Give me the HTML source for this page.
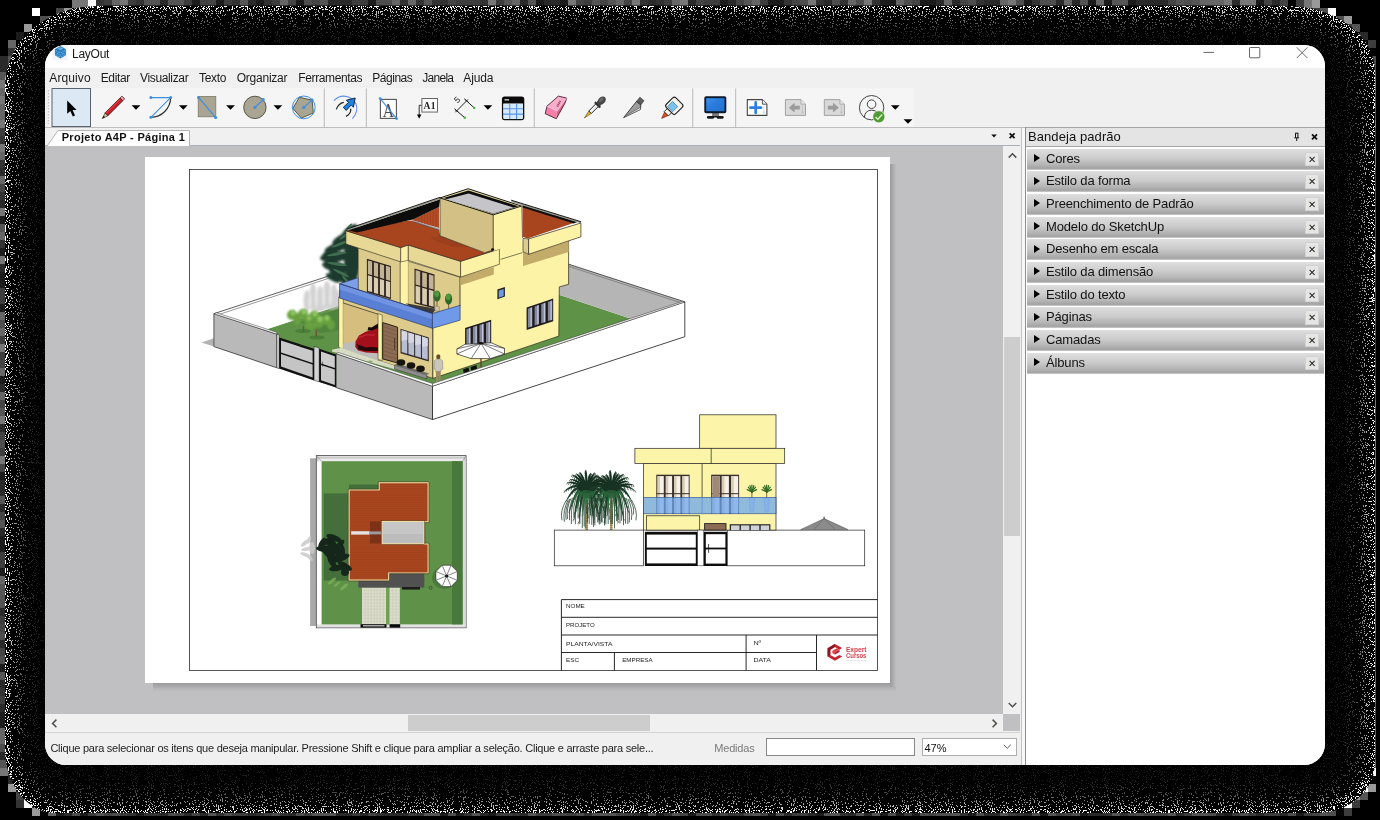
<!DOCTYPE html>
<html>
<head>
<meta charset="utf-8">
<title>LayOut</title>
<style>
*{box-sizing:border-box;margin:0;padding:0}
html,body{width:1380px;height:820px;overflow:hidden;background:#000;font-family:"Liberation Sans",sans-serif;color:#000}
.abs{position:absolute}
#shadow{position:absolute;left:0;top:0;width:1380px;height:820px}
#win{will-change:transform;position:absolute;left:45px;top:45px;width:1280px;height:720px;border-radius:21px;overflow:hidden;background:#f0f0f0}
#title{position:absolute;left:0;top:0;width:1280px;height:23px;background:#fff}
#title .t{position:absolute;left:27px;top:2px;font-size:12px;color:#1a1a1a;letter-spacing:-.25px}
#menu{position:absolute;left:0;top:23px;width:1280px;height:20px;background:#f0f0f0;font-size:12px;color:#1b1b1b}
#menu span{position:absolute;top:3px;white-space:nowrap}
#tool{position:absolute;left:0;top:43px;width:1280px;height:40px;background:#f0f0f0}
#toolin{position:absolute;left:3px;top:0;width:866px;height:39px;background:#f5f5f5}
#toolline{position:absolute;left:0;top:82px;width:1280px;height:1px;background:#bdbdbd}
#tabs{position:absolute;left:0;top:83px;width:976.5px;height:18px;background:#f0f0f0}
#canvas{position:absolute;left:0;top:101px;width:958px;height:568px;background:#c0c0c2}
#paper{position:absolute;left:100px;top:11px;width:745px;height:526px;overflow:hidden;background:#fff}
#vscroll{position:absolute;left:958px;top:101px;width:17px;height:568px;background:#f0f0f0}
#hscroll{position:absolute;left:0;top:669px;width:958px;height:17px;background:#f0f0f0}
#corner{position:absolute;left:958px;top:669px;width:18.5px;height:17.5px;background:#c0c0c2}
#status{position:absolute;left:0;top:686px;width:980px;height:34px;background:#f0f0f0;font-size:12px;color:#222}
#split{position:absolute;left:975px;top:83px;width:6px;height:637px;background:#f0f0f0}
#panel{position:absolute;left:980px;top:82px;width:300px;height:638px;background:#fff;border-left:1px solid #8e8e8e}
#phead{position:absolute;left:0;top:0;width:299px;height:20px;background:#e4e4e4;border-top:1px solid #a6a6a6;border-bottom:1px solid #a6a6a6;font-size:13px}
.bar{position:absolute;left:1px;width:297px;height:21px;font-size:13px;color:#111;
 background:linear-gradient(#e0e0e0 0%,#d9d9d9 12%,#cbcbcb 45%,#b4b4b4 75%,#a3a3a3 92%,#b9b9b9 97%,#e6e6e6 100%)}
.bar .tri{position:absolute;left:7px;top:5.5px;width:0;height:0;border-left:6.5px solid #000;border-top:4.2px solid transparent;border-bottom:4.2px solid transparent}
.bar .lb{position:absolute;left:19px;top:2px;white-space:nowrap;letter-spacing:-.15px}
.bar .x{position:absolute;left:277.5px;top:3px;width:14.5px;height:14.5px;background:#e6e6e6;border:1px solid #d2d2d2}
</style>
</head>
<body>
<svg id="shadow" width="1380" height="820" viewBox="0 0 1380 820">
<!--SH0-->
<defs><filter id="nz" x="0" y="0" width="1380" height="820" filterUnits="userSpaceOnUse" color-interpolation-filters="sRGB">
<feGaussianBlur in="SourceAlpha" stdDeviation="8"/><feComponentTransfer result="b"><feFuncA type="table" tableValues=".5 .5 1"/></feComponentTransfer>
<feGaussianBlur in="SourceAlpha" stdDeviation="16"/><feComponentTransfer result="b2"><feFuncA type="table" tableValues=".5 .5 1"/></feComponentTransfer>
<feColorMatrix in="b" type="matrix" values="0 0 0 -.18 .525  0 0 0 -.18 .525  0 0 0 -.18 .525  0 0 0 0 1" result="m"/>
<feColorMatrix in="b2" type="matrix" values="0 0 0 -2 2.1  0 0 0 -2 2.1  0 0 0 -2 2.1  0 0 0 0 1" result="br"/>
<feTurbulence type="fractalNoise" baseFrequency="0.93 0.77" numOctaves="2" seed="3" result="t"/>
<feColorMatrix in="t" type="matrix" values="1 0 0 0 0  1 0 0 0 0  1 0 0 0 0  0 0 0 0 1" result="n"/>
<feComposite in="m" in2="n" operator="arithmetic" k1="0" k2="1" k3="-1" k4="1" result="d"/>
<feComponentTransfer in="d" result="th"><feFuncR type="linear" slope="200" intercept="-199"/><feFuncG type="linear" slope="200" intercept="-199"/><feFuncB type="linear" slope="200" intercept="-199"/></feComponentTransfer>
<feComposite in="th" in2="br" operator="arithmetic" k1="1" k2="0" k3="0" k4="0" result="o"/>
<feComposite in="o" in2="SourceAlpha" operator="in"/>
</filter></defs>
<path d="M0 88h6v8h-6zM0 104h6v8h-6zM0 112h6v8h-6zM0 152h6v8h-6zM0 176h6v8h-6zM0 232h6v8h-6zM0 312h6v8h-6zM0 328h6v8h-6zM0 368h6v8h-6zM0 392h6v8h-6zM0 576h6v8h-6zM0 728h6v8h-6zM0 736h6v8h-6zM112 0h8v5.5h-8zM280 0h8v5.5h-8zM392 0h8v5.5h-8zM408 0h8v5.5h-8zM512 0h8v5.5h-8zM616 0h8v5.5h-8zM672 0h8v5.5h-8zM752 0h8v5.5h-8zM848 0h8v5.5h-8zM896 0h8v5.5h-8zM944 0h8v5.5h-8zM1000 0h8v5.5h-8zM1064 0h8v5.5h-8zM1096 0h8v5.5h-8zM1200 0h8v5.5h-8zM1208 0h8v5.5h-8zM1216 0h8v5.5h-8zM1280 0h8v5.5h-8zM1374 72h2v8h-2zM1374 88h2v8h-2zM1374 216h2v8h-2zM1374 264h2v8h-2zM1374 304h2v8h-2zM1374 384h2v8h-2zM1374 432h2v8h-2zM1374 448h2v8h-2zM1374 488h2v8h-2zM1374 528h2v8h-2zM1374 536h2v8h-2zM1374 560h2v8h-2zM1374 584h2v8h-2zM1374 592h2v8h-2zM1374 600h2v8h-2zM1374 640h2v8h-2zM1374 672h2v8h-2zM1374 680h2v8h-2zM1374 696h2v8h-2zM1374 728h2v8h-2zM1374 744h2v8h-2zM1374 760h2v8h-2zM8 40h8v8h-8zM48 16h8v8h-8zM48 808h8v8h-8z" fill="#666"/>
<path d="M0 96h6v8h-6zM0 120h6v8h-6zM0 144h6v8h-6zM0 208h6v8h-6zM0 256h6v8h-6zM0 344h6v8h-6zM0 416h6v8h-6zM0 456h6v8h-6zM96 0h8v5.5h-8zM120 0h8v5.5h-8zM488 0h8v5.5h-8zM568 0h8v5.5h-8zM632 0h8v5.5h-8zM680 0h8v5.5h-8zM808 0h8v5.5h-8zM864 0h8v5.5h-8zM1008 0h8v5.5h-8zM1224 0h8v5.5h-8zM1240 0h8v5.5h-8zM1248 0h8v5.5h-8zM1374 80h2v8h-2zM1374 120h2v8h-2zM1374 144h2v8h-2zM1374 152h2v8h-2zM1374 160h2v8h-2zM1374 240h2v8h-2zM1374 400h2v8h-2zM1374 440h2v8h-2zM1374 456h2v8h-2zM1374 464h2v8h-2zM1374 496h2v8h-2zM1374 552h2v8h-2zM1374 568h2v8h-2zM1374 624h2v8h-2zM0 80h8v8h-8zM72 0h8v8h-8zM80 0h8v8h-8zM1304 0h8v8h-8zM0 768h8v8h-8z" fill="#777"/>
<path d="M0 128h6v8h-6zM0 288h6v8h-6zM0 296h6v8h-6zM0 336h6v8h-6zM0 352h6v8h-6zM0 448h6v8h-6zM0 552h6v8h-6zM0 560h6v8h-6zM0 616h6v8h-6zM0 696h6v8h-6zM104 0h8v5.5h-8zM128 0h8v5.5h-8zM184 0h8v5.5h-8zM224 0h8v5.5h-8zM272 0h8v5.5h-8zM352 0h8v5.5h-8zM360 0h8v5.5h-8zM456 0h8v5.5h-8zM464 0h8v5.5h-8zM472 0h8v5.5h-8zM496 0h8v5.5h-8zM584 0h8v5.5h-8zM664 0h8v5.5h-8zM704 0h8v5.5h-8zM712 0h8v5.5h-8zM760 0h8v5.5h-8zM88 811h8v5h-8zM120 811h8v5h-8zM232 811h8v5h-8zM240 811h8v5h-8zM264 811h8v5h-8zM304 811h8v5h-8zM352 811h8v5h-8zM408 811h8v5h-8zM496 811h8v5h-8zM504 811h8v5h-8zM536 811h8v5h-8zM544 811h8v5h-8zM568 811h8v5h-8zM624 811h8v5h-8zM792 811h8v5h-8zM800 811h8v5h-8zM904 811h8v5h-8zM1008 811h8v5h-8zM1056 811h8v5h-8zM1184 811h8v5h-8zM1232 811h8v5h-8zM1248 811h8v5h-8zM1264 811h8v5h-8zM1272 811h8v5h-8zM1304 811h8v5h-8zM1374 136h2v8h-2zM1374 168h2v8h-2zM1374 200h2v8h-2zM1374 248h2v8h-2zM1374 272h2v8h-2zM1374 280h2v8h-2zM1374 336h2v8h-2zM1374 352h2v8h-2zM1374 368h2v8h-2zM1374 504h2v8h-2zM1374 736h2v8h-2zM1374 752h2v8h-2zM1368 40h8v8h-8zM1344 24h8v8h-8zM1312 8h8v8h-8zM1296 0h8v8h-8zM1352 800h8v8h-8zM1344 808h8v8h-8z" fill="#3d3d3d"/>
<path d="M0 136h6v8h-6zM0 160h6v8h-6zM0 192h6v8h-6zM0 240h6v8h-6zM0 688h6v8h-6zM0 744h6v8h-6zM136 0h8v5.5h-8zM232 0h8v5.5h-8zM264 0h8v5.5h-8zM400 0h8v5.5h-8zM416 0h8v5.5h-8zM432 0h8v5.5h-8zM440 0h8v5.5h-8zM480 0h8v5.5h-8zM640 0h8v5.5h-8zM656 0h8v5.5h-8zM784 0h8v5.5h-8zM816 0h8v5.5h-8zM840 0h8v5.5h-8zM872 0h8v5.5h-8zM976 0h8v5.5h-8zM1032 0h8v5.5h-8zM128 811h8v5h-8zM144 811h8v5h-8zM152 811h8v5h-8zM216 811h8v5h-8zM256 811h8v5h-8zM280 811h8v5h-8zM376 811h8v5h-8zM416 811h8v5h-8zM464 811h8v5h-8zM512 811h8v5h-8zM584 811h8v5h-8zM632 811h8v5h-8zM664 811h8v5h-8zM712 811h8v5h-8zM728 811h8v5h-8zM736 811h8v5h-8zM840 811h8v5h-8zM960 811h8v5h-8zM1016 811h8v5h-8zM1104 811h8v5h-8zM1120 811h8v5h-8zM8 48h8v8h-8zM96 0h8v8h-8zM8 768h8v8h-8zM16 800h8v8h-8z" fill="#333"/>
<path d="M0 168h6v8h-6zM0 200h6v8h-6zM0 264h6v8h-6zM0 384h6v8h-6zM0 424h6v8h-6zM0 480h6v8h-6zM0 488h6v8h-6zM0 504h6v8h-6zM0 528h6v8h-6zM0 608h6v8h-6zM0 640h6v8h-6zM0 680h6v8h-6zM0 704h6v8h-6zM160 0h8v5.5h-8zM248 0h8v5.5h-8zM328 0h8v5.5h-8zM336 0h8v5.5h-8zM344 0h8v5.5h-8zM520 0h8v5.5h-8zM544 0h8v5.5h-8zM552 0h8v5.5h-8zM648 0h8v5.5h-8zM688 0h8v5.5h-8zM728 0h8v5.5h-8zM824 0h8v5.5h-8zM936 0h8v5.5h-8zM952 0h8v5.5h-8zM984 0h8v5.5h-8zM992 0h8v5.5h-8zM1056 0h8v5.5h-8zM1072 0h8v5.5h-8zM1136 0h8v5.5h-8zM1144 0h8v5.5h-8zM1152 0h8v5.5h-8zM1160 0h8v5.5h-8zM1232 0h8v5.5h-8zM1272 0h8v5.5h-8zM64 811h8v5h-8zM160 811h8v5h-8zM184 811h8v5h-8zM200 811h8v5h-8zM248 811h8v5h-8zM288 811h8v5h-8zM336 811h8v5h-8zM344 811h8v5h-8zM360 811h8v5h-8zM384 811h8v5h-8zM392 811h8v5h-8zM400 811h8v5h-8zM480 811h8v5h-8zM520 811h8v5h-8zM784 811h8v5h-8zM808 811h8v5h-8zM848 811h8v5h-8zM864 811h8v5h-8zM984 811h8v5h-8zM992 811h8v5h-8zM1024 811h8v5h-8zM1088 811h8v5h-8zM1096 811h8v5h-8zM1176 811h8v5h-8zM1216 811h8v5h-8zM1256 811h8v5h-8zM1280 811h8v5h-8zM0 64h8v8h-8zM0 56h8v8h-8zM1360 32h8v8h-8zM0 752h8v8h-8zM8 776h8v8h-8zM32 800h8v8h-8z" fill="#2a2a2a"/>
<path d="M0 184h6v8h-6zM0 360h6v8h-6zM0 400h6v8h-6zM0 432h6v8h-6zM0 464h6v8h-6zM0 512h6v8h-6zM0 624h6v8h-6zM0 648h6v8h-6zM200 0h8v5.5h-8zM208 0h8v5.5h-8zM288 0h8v5.5h-8zM312 0h8v5.5h-8zM448 0h8v5.5h-8zM576 0h8v5.5h-8zM600 0h8v5.5h-8zM624 0h8v5.5h-8zM696 0h8v5.5h-8zM736 0h8v5.5h-8zM792 0h8v5.5h-8zM912 0h8v5.5h-8zM960 0h8v5.5h-8zM1168 0h8v5.5h-8zM1264 0h8v5.5h-8zM104 811h8v5h-8zM176 811h8v5h-8zM192 811h8v5h-8zM368 811h8v5h-8zM560 811h8v5h-8zM616 811h8v5h-8zM680 811h8v5h-8zM720 811h8v5h-8zM760 811h8v5h-8zM928 811h8v5h-8zM1064 811h8v5h-8zM1128 811h8v5h-8zM1144 811h8v5h-8zM1152 811h8v5h-8zM1160 811h8v5h-8zM1312 811h8v5h-8zM1374 128h2v8h-2zM1374 176h2v8h-2zM1374 184h2v8h-2zM1374 344h2v8h-2zM1374 376h2v8h-2zM1374 408h2v8h-2zM1374 424h2v8h-2zM1374 512h2v8h-2zM1374 576h2v8h-2zM1374 648h2v8h-2zM1374 664h2v8h-2zM1374 712h2v8h-2zM56 8h8v8h-8zM1280 0h8v8h-8zM16 792h8v8h-8z" fill="#444"/>
<path d="M0 216h6v8h-6zM0 248h6v8h-6zM0 272h6v8h-6zM0 280h6v8h-6zM0 304h6v8h-6zM0 376h6v8h-6zM0 472h6v8h-6zM0 536h6v8h-6zM0 544h6v8h-6zM0 568h6v8h-6zM0 664h6v8h-6zM0 712h6v8h-6zM0 720h6v8h-6zM192 0h8v5.5h-8zM216 0h8v5.5h-8zM256 0h8v5.5h-8zM296 0h8v5.5h-8zM368 0h8v5.5h-8zM536 0h8v5.5h-8zM560 0h8v5.5h-8zM720 0h8v5.5h-8zM768 0h8v5.5h-8zM776 0h8v5.5h-8zM880 0h8v5.5h-8zM888 0h8v5.5h-8zM920 0h8v5.5h-8zM928 0h8v5.5h-8zM1024 0h8v5.5h-8zM1088 0h8v5.5h-8zM1104 0h8v5.5h-8zM1128 0h8v5.5h-8zM1256 0h8v5.5h-8zM56 811h8v5h-8zM80 811h8v5h-8zM136 811h8v5h-8zM440 811h8v5h-8zM456 811h8v5h-8zM488 811h8v5h-8zM640 811h8v5h-8zM656 811h8v5h-8zM688 811h8v5h-8zM768 811h8v5h-8zM816 811h8v5h-8zM880 811h8v5h-8zM896 811h8v5h-8zM912 811h8v5h-8zM968 811h8v5h-8zM1040 811h8v5h-8zM1080 811h8v5h-8zM1224 811h8v5h-8zM1296 811h8v5h-8zM16 32h8v8h-8zM16 784h8v8h-8z" fill="#1c1c1c"/>
<path d="M0 224h6v8h-6zM0 408h6v8h-6zM0 496h6v8h-6zM0 520h6v8h-6zM0 584h6v8h-6zM0 592h6v8h-6zM0 600h6v8h-6zM0 672h6v8h-6zM144 0h8v5.5h-8zM152 0h8v5.5h-8zM168 0h8v5.5h-8zM176 0h8v5.5h-8zM240 0h8v5.5h-8zM320 0h8v5.5h-8zM424 0h8v5.5h-8zM504 0h8v5.5h-8zM528 0h8v5.5h-8zM592 0h8v5.5h-8zM608 0h8v5.5h-8zM744 0h8v5.5h-8zM1080 0h8v5.5h-8zM1112 0h8v5.5h-8zM1120 0h8v5.5h-8zM1176 0h8v5.5h-8zM1192 0h8v5.5h-8zM96 811h8v5h-8zM208 811h8v5h-8zM312 811h8v5h-8zM320 811h8v5h-8zM328 811h8v5h-8zM424 811h8v5h-8zM432 811h8v5h-8zM472 811h8v5h-8zM528 811h8v5h-8zM600 811h8v5h-8zM608 811h8v5h-8zM648 811h8v5h-8zM672 811h8v5h-8zM752 811h8v5h-8zM824 811h8v5h-8zM832 811h8v5h-8zM856 811h8v5h-8zM872 811h8v5h-8zM952 811h8v5h-8zM1000 811h8v5h-8zM1048 811h8v5h-8zM1112 811h8v5h-8zM1168 811h8v5h-8zM1192 811h8v5h-8zM1200 811h8v5h-8zM1374 104h2v8h-2zM1374 192h2v8h-2zM1374 288h2v8h-2zM1374 312h2v8h-2zM1374 328h2v8h-2zM1374 360h2v8h-2zM1374 416h2v8h-2zM1374 472h2v8h-2zM1374 480h2v8h-2zM1374 520h2v8h-2zM1374 632h2v8h-2zM1374 704h2v8h-2zM1374 720h2v8h-2zM0 72h8v8h-8zM8 56h8v8h-8zM1352 24h8v8h-8zM1360 792h8v8h-8zM1320 808h8v8h-8zM0 760h8v8h-8z" fill="#555"/>
<path d="M0 320h6v8h-6zM0 440h6v8h-6zM0 632h6v8h-6zM0 656h6v8h-6zM304 0h8v5.5h-8zM376 0h8v5.5h-8zM384 0h8v5.5h-8zM800 0h8v5.5h-8zM832 0h8v5.5h-8zM856 0h8v5.5h-8zM904 0h8v5.5h-8zM968 0h8v5.5h-8zM1016 0h8v5.5h-8zM1040 0h8v5.5h-8zM1048 0h8v5.5h-8zM1184 0h8v5.5h-8zM72 811h8v5h-8zM112 811h8v5h-8zM168 811h8v5h-8zM224 811h8v5h-8zM272 811h8v5h-8zM296 811h8v5h-8zM448 811h8v5h-8zM552 811h8v5h-8zM576 811h8v5h-8zM592 811h8v5h-8zM696 811h8v5h-8zM704 811h8v5h-8zM744 811h8v5h-8zM776 811h8v5h-8zM888 811h8v5h-8zM920 811h8v5h-8zM936 811h8v5h-8zM944 811h8v5h-8zM976 811h8v5h-8zM1032 811h8v5h-8zM1072 811h8v5h-8zM1136 811h8v5h-8zM1208 811h8v5h-8zM1240 811h8v5h-8zM1288 811h8v5h-8zM1374 96h2v8h-2zM1374 112h2v8h-2zM1374 208h2v8h-2zM1374 224h2v8h-2zM1374 232h2v8h-2zM1374 256h2v8h-2zM1374 296h2v8h-2zM1374 320h2v8h-2zM1374 392h2v8h-2zM1374 544h2v8h-2zM1374 608h2v8h-2zM1374 616h2v8h-2zM1374 656h2v8h-2zM1374 688h2v8h-2zM40 16h8v8h-8zM1368 64h8v8h-8zM1368 56h8v8h-8zM1336 16h8v8h-8zM1320 8h8v8h-8zM1328 808h8v8h-8zM0 744h8v8h-8z" fill="#4e4e4e"/>
<path d="M24 24h8v8h-8zM64 8h8v8h-8zM1344 16h8v8h-8zM1312 0h8v8h-8zM1368 784h8v8h-8zM1352 792h8v8h-8zM8 784h8v8h-8zM32 808h8v8h-8z" fill="#999"/>
<path d="M88 0h8v8h-8zM1328 8h8v8h-8zM1344 800h8v8h-8zM24 800h8v8h-8zM1368 768h8v8h-8zM1360 784h8v8h-8zM32 8h8v8h-8z" fill="#fff"/>
<path d="M97 6H1287A88 66 0 0 1 1375 72V763A58 50 0 0 1 1317 813H55A50 64 0 0 1 5 749V86A92 80 0 0 1 97 6Z" fill="#fff" filter="url(#nz)"/>
<!--SH1-->
</svg>
<div id="win">
  <div id="title"><span class="t">LayOut</span>
    <svg class="abs" style="left:0;top:0" width="1280" height="23" viewBox="45 45 1280 23">
      <rect x="52.4" y="45" width="15.4" height="15.2" fill="#f3f4f7"/>
      <path d="M60.4 46L65.9 49.2V55.3L60.4 58.5L54.9 55.3V49.2Z" fill="#2c7ebf"/>
      <path d="M60.4 46.9L63.4 48.6L60.4 50.3L57.4 48.6Z" fill="#63b0e8"/>
      <g fill="none" stroke="#69b4ea" stroke-width=".95" stroke-dasharray="1.9 1.1">
        <path d="M55.6 50.4L60.4 53.1L65.2 50.4"/><path d="M55.6 52.5L60.4 55.2L65.2 52.5" stroke-dashoffset="1.5"/><path d="M55.6 54.6L60.4 57.3L65.2 54.6"/>
      </g>
      <path d="M1203.4 52.4H1214" stroke="#666" stroke-width="1"/>
      <rect x="1249.5" y="47.5" width="10.3" height="10.3" rx=".8" fill="none" stroke="#666" stroke-width="1"/>
      <path d="M1296.8 47.4L1307.4 58M1307.4 47.4L1296.8 58" stroke="#666" stroke-width="1"/>
    </svg></div>
  <div id="menu">
    <span style="left:4.3px;letter-spacing:0.10px">Arquivo</span><span style="left:55.7px;letter-spacing:-0.34px">Editar</span><span style="left:95.0px;letter-spacing:-0.35px">Visualizar</span><span style="left:154.0px;letter-spacing:-0.34px">Texto</span><span style="left:191.7px;letter-spacing:-0.23px">Organizar</span><span style="left:253.3px;letter-spacing:-0.37px">Ferramentas</span><span style="left:327.3px;letter-spacing:-0.48px">Páginas</span><span style="left:377.3px;letter-spacing:-0.73px">Janela</span><span style="left:418.3px;letter-spacing:-0.14px">Ajuda</span>
  </div>
  <div id="tool"><div id="toolin"></div>
<svg class="abs" style="left:0;top:0" width="1280" height="40" viewBox="45 88 1280 40">
<defs>
<path id="dd" d="M-4.4 -2.2h8.8l-4.4 4.5z" fill="#000"/>
<linearGradient id="scr" x1="0" y1="0" x2="1" y2="1"><stop offset="0" stop-color="#3c93f0"/><stop offset=".45" stop-color="#2a7bdc"/><stop offset="1" stop-color="#2271cf"/></linearGradient>
</defs>
<!-- grip -->
<path d="M48.5 90v34" stroke="#c4c4c4" stroke-width="1.4" stroke-dasharray="1.5 1.5"/>
<!-- select -->
<rect x="52" y="88.5" width="38.5" height="38" fill="#dce9f5" stroke="#59636d" stroke-width="1"/>
<path d="M67.2 100.6V113.8L70.3 110.9L72.8 116.4L75 115.4L72.6 110L76.6 109.9Z" fill="#000"/>
<!-- pencil -->
<g transform="translate(102.3 118.5) rotate(-45.1)">
<path d="M0 0L6 -2V2Z" fill="#d9c39a" stroke="#222" stroke-width=".6"/>
<path d="M0 0L2.8 -.95V.95Z" fill="#111"/>
<rect x="6" y="-2" width="21" height="4" fill="#c91f2b" stroke="#3a0d10" stroke-width=".7"/>
<rect x="6.3" y="-1.7" width="20.4" height="1.2" fill="#e2414a" opacity=".8"/>
<rect x="27" y="-2" width="2.8" height="4" rx=".9" fill="#e9a4a8" stroke="#3a0d10" stroke-width=".7"/>
</g>
<use href="#dd" x="136" y="107.4"/>
<!-- arc -->
<path d="M150.9 117.3A19.7 19.7 0 0 0 170.6 97.6" fill="none" stroke="#333" stroke-width="1.2"/>
<path d="M150.9 97.6H170.6L150.9 117.3" fill="none" stroke="#3b8fe3" stroke-width="1.1"/>
<g fill="#3b8fe3"><circle cx="150.9" cy="97.6" r="1.5"/><circle cx="170.6" cy="97.6" r="1.5"/><circle cx="150.9" cy="117.3" r="1.5"/></g>
<use href="#dd" x="183.3" y="107.4"/>
<!-- rectangle -->
<rect x="198.2" y="96.4" width="17.6" height="20.4" fill="#a9a592" stroke="#7d7a68" stroke-width=".8"/>
<path d="M198.6 97.4L215.6 117.6" stroke="#3b8fe3" stroke-width="1.2"/>
<g fill="#3b8fe3"><circle cx="198.6" cy="97.4" r="1.5"/><circle cx="215.6" cy="117.6" r="1.5"/></g>
<use href="#dd" x="230.5" y="107.4"/>
<!-- circle -->
<circle cx="254.9" cy="107.4" r="11.2" fill="#a9a592" stroke="#4d4b3c" stroke-width=".9"/>
<path d="M254.9 107.4L263.2 99.7" stroke="#3b8fe3" stroke-width="1.2"/>
<g fill="#3b8fe3"><circle cx="254.9" cy="107.4" r="1.6"/><circle cx="263.2" cy="99.7" r="1.6"/></g>
<use href="#dd" x="277.9" y="107.4"/>
<!-- polygon -->
<path d="M312.1 100.1L313.3 113L301.4 118.1L292.8 108.4L299.4 97.3Z" fill="#a9a592" stroke="#4d4b3c" stroke-width=".9"/>
<circle cx="303.8" cy="107.4" r="11.4" fill="none" stroke="#3b8fe3" stroke-width="1"/>
<path d="M303.8 107.4L312.1 100.1" stroke="#3b8fe3" stroke-width="1.2"/>
<g fill="#3b8fe3"><circle cx="303.8" cy="107.4" r="1.6"/><circle cx="312.1" cy="100.1" r="1.6"/></g>
<!-- sep -->
<path d="M324.3 88.5v38.5M366.4 88.5v38.5M534.3 88.5v38.5M692.7 88.5v38.5M735.6 88.5v38.5" stroke="#c3c3c3" stroke-width="1.2"/>
<!-- offset -->
<path d="M334 100.7Q338 96 344 96.1Q352 96.6 355.8 103.5Q359 111.5 352.4 118.7" fill="none" stroke="#5d8fe6" stroke-width="1.1"/>
<path d="M336.3 109.4Q338.3 103.3 343.8 102.3M350.7 108.6Q351.4 113.5 346 116.4" fill="none" stroke="#222" stroke-width="1.2"/>
<path d="M355.2 98L353.4 107.2L351.2 105L346.2 110.4L343.3 107.3L348.6 102.4L346.4 100.2Z" fill="#1e82e0" stroke="#0b1a30" stroke-width=".9" stroke-linejoin="round"/>
<!-- text -->
<rect x="380.4" y="99.4" width="16" height="19" fill="#fff" stroke="#555" stroke-width="1.1"/>
<text x="388.5" y="116.8" font-family="Liberation Serif" font-size="19.5" text-anchor="middle" fill="#4a4a4a" transform="translate(388.5 0) scale(.8 1) translate(-388.5 0)">A</text>
<path d="M380.2 98.6L396.6 118.6" stroke="#3b8fe3" stroke-width="1.1"/>
<g fill="#3b8fe3"><circle cx="380.2" cy="98.6" r="1.4"/><circle cx="396.6" cy="118.6" r="1.4"/></g>
<!-- label -->
<path d="M421.8 105.3H419.2V115.4" fill="none" stroke="#333" stroke-width="1"/>
<path d="M417 114.6h4.4l-2.2 4.2z" fill="#000"/>
<rect x="421.9" y="98.5" width="15.6" height="13.6" fill="#fdfdfd" stroke="#666" stroke-width="1"/>
<rect x="422.6" y="111.6" width="15.4" height="1.2" fill="#aaa"/>
<text x="429.8" y="108.8" font-family="Liberation Serif" font-weight="bold" font-size="9.6" letter-spacing=".5" text-anchor="middle" fill="#222">A1</text>
<!-- dimension -->
<path d="M455.4 112.2L468 99.4M454.4 108.7L464.8 117.8M464.2 98.7L474.2 107.9" stroke="#222" stroke-width="1" fill="none"/>
<path d="M455 109.6l3.4 2.4M465 99.6l3.4 2.4" stroke="#222" stroke-width=".9" fill="none"/>
<circle cx="464.8" cy="117.8" r="1.2" fill="#45b53a"/><circle cx="474.2" cy="107.9" r="1.2" fill="#45b53a"/>
<text x="0" y="0" font-size="8.5" fill="#222" font-family="Liberation Sans" transform="translate(457.6 103.4) rotate(-45)">5</text>
<use href="#dd" x="487.9" y="107.4"/>
<!-- table -->
<rect x="502.6" y="97.2" width="21" height="22.4" rx="2" fill="#fff" stroke="#111" stroke-width="1.4"/>
<path d="M502.6 99.2a2 2 0 0 1 2-2h17a2 2 0 0 1 2 2v4.3h-21z" fill="#0a0a0a"/>
<rect x="504.5" y="99.3" width="4.5" height="1.1" fill="#fff"/>
<g fill="#d6e9fb"><rect x="503.6" y="104" width="5.6" height="4.2"/><rect x="510.4" y="104" width="5.6" height="4.2"/><rect x="517.2" y="104" width="5.6" height="4.2"/><rect x="503.6" y="109.3" width="5.6" height="4.2"/><rect x="510.4" y="109.3" width="5.6" height="4.2"/><rect x="517.2" y="109.3" width="5.6" height="4.2"/><rect x="503.6" y="114.6" width="5.6" height="4.2"/><rect x="510.4" y="114.6" width="5.6" height="4.2"/><rect x="517.2" y="114.6" width="5.6" height="4.2"/></g>
<path d="M509.8 103.6v15.4M516.6 103.6v15.4M503.2 108.8h20M503.2 114.1h20" stroke="#4c8fe6" stroke-width="1.1"/>
<!-- eraser -->
<path d="M558.3 96.1L566.7 98.1L557.1 111.1L547 106.2Z" fill="#f8adc8"/>
<path d="M547 106.2L557.1 111.1L556.3 118.7L545.2 113.7Z" fill="#f57fa7"/>
<path d="M566.7 98.1L565.2 102.7L556.3 118.7L557.1 111.1Z" fill="#d8628c"/>
<path d="M558.3 96.1L566.7 98.1L565.2 102.7L556.3 118.7L545.2 113.7L547 106.2Z" fill="none" stroke="#4a2030" stroke-width=".9" stroke-linejoin="round"/>
<path d="M547 106.2L557.1 111.1L566.7 98.1" fill="none" stroke="#fbd0df" stroke-width=".7"/>
<path d="M557.2 106.6L560.6 100.2" stroke="#a0385f" stroke-width="2" stroke-dasharray="1.1 .7"/>
<!-- eyedropper -->
<g transform="translate(584.4 117.9) rotate(-45)">
<path d="M0 0L8 -1.7V1.7Z" fill="#e8b92c" stroke="#5a4710" stroke-width=".6"/>
<rect x="8" y="-1.8" width="10" height="3.6" fill="#eef0f2" stroke="#222" stroke-width=".9"/>
<rect x="17.4" y="-3.9" width="2.3" height="7.8" rx="1" fill="#333"/>
<rect x="19.2" y="-2.6" width="2" height="5.2" fill="#3a3a3a"/>
<ellipse cx="24.4" cy="0" rx="4.8" ry="3.4" fill="#474747"/>
<ellipse cx="24.8" cy="-.9" rx="3" ry="1.3" fill="#6a6a6a"/>
</g>
<!-- knife -->
<path d="M623.7 117.5L636.5 101.4L640.8 104.8L640.5 109.4Z" fill="#9c9c9c" stroke="#222" stroke-width=".8" stroke-linejoin="round"/>
<path d="M623.7 117.5L640.5 109.4L640.6 107.2L626 115.6Z" fill="#e6e6e6" stroke="#333" stroke-width=".5"/>
<path d="M636.4 101.6L639.9 97.2L644 100.7L640.8 104.9Z" fill="#555" stroke="#333" stroke-width=".6"/>
<path d="M638.2 99.6l3.6 3M639.4 98.3l3.6 3" stroke="#7a7a7a" stroke-width=".6"/>
<!-- glue -->
<g transform="translate(661.7 118.4) rotate(-45)">
<path d="M0 0L6.6 -2.5V2.5Z" fill="#d9502b" stroke="#6a1f0c" stroke-width=".6"/>
<rect x="6.5" y="-3" width="4.6" height="6" fill="#f7f3e6" stroke="#222" stroke-width=".9"/>
<rect x="11" y="-6.7" width="13.6" height="13.4" rx="2.3" fill="#f5f3ea" stroke="#222" stroke-width="1.1"/>
<rect x="12.6" y="-4.2" width="7" height="7.2" fill="#7cc4ee" stroke="#2c6d9c" stroke-width=".6"/>
</g>
<!-- monitor -->
<rect x="712.1" y="112.5" width="6.8" height="4" fill="#7b7b7b"/>
<path d="M708.2 116H722.4a1.3 1.3 0 0 1 0 2.7H717.5l-1-1.1h-2.2l-1 1.1H708.2a1.3 1.3 0 0 1 0 -2.7z" fill="#1a1a1a"/>
<rect x="704.3" y="96.2" width="22" height="17.1" rx="1.8" fill="#0d1a2b"/>
<rect x="706.2" y="98.2" width="18.3" height="13" fill="url(#scr)"/>
<!-- add page -->
<path d="M747.3 99.6H762.4L766.9 104.2V115.4H747.3Z" fill="#fff" stroke="#444" stroke-width="1.1" stroke-linejoin="round"/>
<path d="M762.4 99.6V104.2H766.9" fill="#eee" stroke="#444" stroke-width=".9" stroke-linejoin="round"/>
<path d="M763.9 105.5v8.5M762.5 112.2h3" stroke="#c9c9c9" stroke-width=".7"/>
<path d="M750.4 107.7h10.6M755.7 102.4v10.6" stroke="#2f80d8" stroke-width="2.7" stroke-linecap="round"/>
<!-- prev -->
<g id="pg"><path d="M785.4 99.6H801L805.5 104.2V115.4H785.4Z" fill="#d9d9d9" stroke="#a2a2a2" stroke-width="1" stroke-linejoin="round"/>
<path d="M801 99.6V104.2H805.5" fill="#e6e6e6" stroke="#a2a2a2" stroke-width=".8"/>
<path d="M802.4 105.5v8.5M801 112.2h3" stroke="#bdbdbd" stroke-width=".7"/></g>
<path d="M788.8 107.7L794.6 102.8V105.8H799.8V109.6H794.6V112.6Z" fill="#9b9b9b"/>
<use href="#pg" x="38.9"/>
<path d="M838.8 107.7L833 102.8V105.8H827.8V109.6H833V112.6Z" fill="#9b9b9b"/>
<!-- user -->
<circle cx="871.6" cy="107.7" r="12.2" fill="none" stroke="#444" stroke-width="1"/>
<circle cx="871.6" cy="104.2" r="4.3" fill="none" stroke="#444" stroke-width="1"/>
<path d="M864.3 117.3Q865 110.3 871.6 110.2Q875.5 110.2 877.4 112.4" fill="none" stroke="#444" stroke-width="1"/>
<circle cx="878.8" cy="116.8" r="6" fill="#4f9a32" stroke="#f5f5f5" stroke-width=".6"/>
<path d="M875.6 117L877.9 119.3L882.1 114.5" fill="none" stroke="#dcf5c8" stroke-width="1.3"/>
<use href="#dd" x="895.3" y="107.4"/>
<use href="#dd" x="908" y="121.4"/>
</svg>
</div>
  <div id="toolline"></div>
  <div id="tabs">
    <svg class="abs" style="left:0;top:0" width="977" height="19" viewBox="45 128 977 19">
      <rect x="45" y="145" width="977" height="1" fill="#a7b1ba"/>
      <path d="M47.5 145.5 L58 130.5 H189.5 V145.5" fill="#fff" stroke="#b4b4b4" stroke-width="1"/>
      <rect x="48" y="145" width="141" height="1" fill="#fff"/>
      <path d="M991.2 134.6h5.6l-2.8 3z" fill="#111"/>
      <path d="M1009.6 133.4l5 4.8M1014.6 133.4l-5 4.8" stroke="#111" stroke-width="1.7" fill="none"/>
    </svg>
    <span class="abs" style="left:16.7px;top:3px;font-size:11px;font-weight:bold;letter-spacing:.3px;white-space:nowrap;color:#111">Projeto A4P - Página 1</span>
  </div>
  <div id="canvas"><div class="abs" style="left:108px;top:536.5px;width:743px;height:9px;background:linear-gradient(#9a9a9c,#a9a9ab 35%,#bababc 75%,#c0c0c2)"></div><div class="abs" style="left:845px;top:18px;width:6.5px;height:523px;background:linear-gradient(90deg,#9a9a9c,#aaaaac 40%,#bcbcbe 80%,#c0c0c2)"></div><div id="paper"><svg class="abs" style="left:0;top:0" width="745" height="527" viewBox="145 157 745 527">
<!--H3D0-->
<defs><filter id="bl" x="-20%" y="-20%" width="140%" height="140%"><feGaussianBlur stdDeviation="1.1"/></filter></defs>
<polygon points="201.5,342.4 213.9,338.2 213.9,346.6" fill="#b3b3b3"/>
<polygon points="213.9,346.6 432.5,419.6 684.8,336.7 466.1,263.7" fill="#5e9247"/>
<polygon points="213.9,313.7 466.1,230.9 466.1,263.7 213.9,346.6" fill="#ffffff"/>
<polyline points="213.9,313.7 466.1,230.9" fill="none" stroke="#333" stroke-width="0.8"/>
<polyline points="216.5,315.3 466.0,233.0" fill="none" stroke="#555" stroke-width="0.6"/>
<polygon points="466.1,230.9 684.8,301.9 684.8,336.7 466.1,263.7" fill="#b5b5b5"/>
<polyline points="466.1,230.9 684.8,301.9" fill="none" stroke="#333" stroke-width="0.8"/>
<polyline points="466.0,233.0 682.2,303.2" fill="none" stroke="#666" stroke-width="0.6"/>
<g fill="#c4c4c4" opacity=".75" filter="url(#bl)">
<ellipse cx="307.0" cy="301.0" rx="3.5" ry="11.0"/>
<ellipse cx="313.0" cy="296.0" rx="3.5" ry="13.0"/>
<ellipse cx="320.0" cy="299.0" rx="4.0" ry="13.0"/>
<ellipse cx="327.0" cy="294.0" rx="4.0" ry="13.0"/>
<ellipse cx="334.0" cy="297.0" rx="3.5" ry="13.0"/>
<ellipse cx="338.0" cy="300.0" rx="2.5" ry="10.0"/>
<ellipse cx="318.0" cy="307.0" rx="9.0" ry="5.0"/>
<ellipse cx="331.0" cy="305.0" rx="7.0" ry="5.0"/>
</g>
<g fill="#ececec" opacity=".9" filter="url(#bl)">
<ellipse cx="310.0" cy="301.0" rx="1.2" ry="9.0"/>
<ellipse cx="316.5" cy="298.0" rx="1.2" ry="10.0"/>
<ellipse cx="323.5" cy="297.0" rx="1.3" ry="10.0"/>
<ellipse cx="330.5" cy="297.0" rx="1.2" ry="9.0"/>
</g>
<polygon points="300.0,322.0 339.7,308.5 339.7,330.0 320.0,333.0" fill="#4f843c"/>
<g fill="#1f3b2d" filter="url(#bl)">
<ellipse cx="349.0" cy="231.0" rx="10.0" ry="3.5" transform="rotate(-40 349.0 231.0)"/>
<ellipse cx="343.0" cy="238.0" rx="12.0" ry="4.0" transform="rotate(-28 343.0 238.0)"/>
<ellipse cx="338.0" cy="247.0" rx="14.0" ry="4.5" transform="rotate(-18 338.0 247.0)"/>
<ellipse cx="335.0" cy="257.0" rx="15.0" ry="5.0" transform="rotate(-5 335.0 257.0)"/>
<ellipse cx="336.0" cy="267.0" rx="14.0" ry="5.0" transform="rotate(12 336.0 267.0)"/>
<ellipse cx="340.0" cy="276.0" rx="12.0" ry="5.0" transform="rotate(30 340.0 276.0)"/>
<ellipse cx="347.0" cy="283.0" rx="9.0" ry="4.5" transform="rotate(55 347.0 283.0)"/>
<ellipse cx="352.0" cy="257.0" rx="8.0" ry="28.0" transform="rotate(0 352.0 257.0)"/>
<ellipse cx="330.0" cy="263.0" rx="8.0" ry="3.0" transform="rotate(-15 330.0 263.0)"/>
<ellipse cx="328.0" cy="253.0" rx="7.0" ry="2.5" transform="rotate(-30 328.0 253.0)"/>
<ellipse cx="333.0" cy="278.0" rx="8.0" ry="3.0" transform="rotate(30 333.0 278.0)"/>
</g>
<g fill="#3f6d50">
<ellipse cx="346.0" cy="235.0" rx="8.0" ry="1.3" transform="rotate(-35 346.0 235.0)"/>
<ellipse cx="340.0" cy="244.0" rx="9.0" ry="1.4" transform="rotate(-22 340.0 244.0)"/>
<ellipse cx="337.0" cy="254.0" rx="10.0" ry="1.4" transform="rotate(-10 337.0 254.0)"/>
<ellipse cx="337.0" cy="264.0" rx="10.0" ry="1.4" transform="rotate(8 337.0 264.0)"/>
<ellipse cx="341.0" cy="273.0" rx="9.0" ry="1.4" transform="rotate(26 341.0 273.0)"/>
<ellipse cx="348.0" cy="228.0" rx="6.0" ry="1.2" transform="rotate(-48 348.0 228.0)"/>
<ellipse cx="346.0" cy="280.0" rx="6.0" ry="1.3" transform="rotate(50 346.0 280.0)"/>
</g>
<g fill="#68a040" filter="url(#bl)">
<ellipse cx="292.0" cy="315.0" rx="5.0" ry="5.0"/>
<ellipse cx="297.0" cy="319.0" rx="4.0" ry="6.0"/>
<ellipse cx="303.0" cy="314.0" rx="5.0" ry="5.0"/>
<ellipse cx="308.0" cy="320.0" rx="4.0" ry="5.0"/>
<ellipse cx="314.0" cy="316.0" rx="5.0" ry="5.0"/>
<ellipse cx="319.0" cy="322.0" rx="5.0" ry="6.0"/>
<ellipse cx="326.0" cy="320.0" rx="5.0" ry="5.0"/>
<ellipse cx="331.0" cy="325.0" rx="4.0" ry="5.0"/>
<ellipse cx="311.0" cy="326.0" rx="6.0" ry="4.0"/>
</g>
<g fill="#93c862" filter="url(#bl)">
<ellipse cx="293.0" cy="313.0" rx="2.5" ry="2.5"/>
<ellipse cx="304.0" cy="312.0" rx="2.5" ry="2.5"/>
<ellipse cx="315.0" cy="314.0" rx="2.5" ry="2.5"/>
<ellipse cx="320.0" cy="319.0" rx="2.5" ry="3.0"/>
<ellipse cx="327.0" cy="318.0" rx="2.5" ry="2.5"/>
<ellipse cx="309.0" cy="318.0" rx="2.0" ry="2.5"/>
</g>
<path d="M303.5 326v6M316.3 330v7" stroke="#6b5533" stroke-width="1.3"/>
<ellipse cx="303" cy="331" rx="8" ry="2" fill="#3f7231" opacity=".6"/><ellipse cx="317" cy="337.5" rx="8" ry="2" fill="#3f7231" opacity=".6"/>
<polygon points="339.7,296.0 432.9,326.0 432.9,378.4 339.7,347.7" fill="#dccb8b" stroke="#2a2418" stroke-width="0.6" stroke-linejoin="round"/>
<polygon points="338.7,297.0 343.3,298.5 343.3,349.0 338.7,347.5" fill="#fdf3a7" stroke="#2a2418" stroke-width="0.5" stroke-linejoin="round"/>
<polygon points="343.3,303.0 378.1,314.2 378.1,360.5 343.3,348.6" fill="#d6bf7e"/>
<polygon points="343.3,343.6 356.0,341.5 378.1,348.0 378.1,360.5 343.3,348.6" fill="#bcbcbc"/>
<polyline points="343.3,303.0 378.1,314.2" fill="none" stroke="#2a2418" stroke-width="0.7"/>
<path d="M378.1 327.5L372 330L366 331.5L359 335.5L355.5 341.5L355.3 347L358 350.5L366 352.5L378.1 353.2Z" fill="#a3101b"/>
<path d="M378.1 323.5L371.5 327.5L368.5 327L367.5 330.5L372 330.5L378.1 328Z" fill="#140608"/>
<path d="M356.5 344L366 347.5L371 347L378.1 347.5V351L366 351L358.5 349.5Z" fill="#25070a"/>
<path d="M359 337.5Q366 333.5 375 335" stroke="#c83040" stroke-width="1" fill="none"/>
<polygon points="378.1,313.6 382.2,315.0 382.2,360.6 378.1,359.3" fill="#fdf3a7" stroke="#2a2418" stroke-width="0.5" stroke-linejoin="round"/>
<polygon points="382.7,322.6 397.6,327.2 397.6,363.0 382.7,358.9" fill="#8b6b52" stroke="#2a2418" stroke-width="1" stroke-linejoin="round"/>
<polyline points="383.2,326.6 397.2,331.2" fill="none" stroke="#6f543f" stroke-width="0.6"/>
<polyline points="383.2,330.6 397.2,335.2" fill="none" stroke="#6f543f" stroke-width="0.6"/>
<polyline points="383.2,334.6 397.2,339.1" fill="none" stroke="#6f543f" stroke-width="0.6"/>
<polyline points="383.2,338.6 397.2,343.1" fill="none" stroke="#6f543f" stroke-width="0.6"/>
<polyline points="383.2,342.6 397.2,347.1" fill="none" stroke="#6f543f" stroke-width="0.6"/>
<polyline points="383.2,346.6 397.2,351.1" fill="none" stroke="#6f543f" stroke-width="0.6"/>
<polyline points="383.2,350.6 397.2,355.1" fill="none" stroke="#6f543f" stroke-width="0.6"/>
<polyline points="383.2,354.6 397.2,359.0" fill="none" stroke="#6f543f" stroke-width="0.6"/>
<polyline points="394.6,338.0 394.6,350.0" fill="none" stroke="#3a2a20" stroke-width="0.7"/>
<polygon points="400.5,328.7 428.8,337.4 428.8,361.5 400.5,353.3" fill="#332e2c"/>
<polygon points="401.6,330.3 407.3,332.1 407.3,353.8 401.6,352.1" fill="#b9bdd2"/>
<polygon points="401.6,330.3 407.3,332.1 407.3,339.8 401.6,341.0" fill="#d4d6e4"/>
<polygon points="408.4,332.4 414.1,334.2 414.1,355.7 408.4,354.1" fill="#b9bdd2"/>
<polygon points="408.4,332.4 414.1,334.2 414.1,341.9 408.4,343.1" fill="#d4d6e4"/>
<polygon points="415.2,334.5 420.9,336.3 420.9,357.7 415.2,356.1" fill="#b9bdd2"/>
<polygon points="415.2,334.5 420.9,336.3 420.9,344.0 415.2,345.2" fill="#d4d6e4"/>
<polygon points="422.0,336.6 427.7,338.4 427.7,359.7 422.0,358.0" fill="#b9bdd2"/>
<polygon points="422.0,336.6 427.7,338.4 427.7,346.1 422.0,347.3" fill="#d4d6e4"/>
<polygon points="332.0,349.7 341.3,347.7 378.1,360.5 382.2,361.5 395.5,366.0 395.5,369.4 332.0,351.4" fill="#d9dcc4"/>
<polygon points="369.5,360.2 373.0,361.2 371.0,363.0 367.6,362.0" fill="#8fb06c"/>
<polyline points="339.5,348.9 336.5,351.7" fill="none" stroke="#bfc4a8" stroke-width="0.5"/>
<polyline points="346.0,351.0 343.0,353.8" fill="none" stroke="#bfc4a8" stroke-width="0.5"/>
<polyline points="352.5,353.2 349.5,356.0" fill="none" stroke="#bfc4a8" stroke-width="0.5"/>
<polyline points="359.0,355.3 356.0,358.1" fill="none" stroke="#bfc4a8" stroke-width="0.5"/>
<polyline points="365.5,357.5 362.5,360.3" fill="none" stroke="#bfc4a8" stroke-width="0.5"/>
<polyline points="372.0,359.6 369.0,362.4" fill="none" stroke="#bfc4a8" stroke-width="0.5"/>
<polyline points="378.5,361.8 375.5,364.6" fill="none" stroke="#bfc4a8" stroke-width="0.5"/>
<polyline points="385.0,363.9 382.0,366.8" fill="none" stroke="#bfc4a8" stroke-width="0.5"/>
<polyline points="391.5,366.1 388.5,368.9" fill="none" stroke="#bfc4a8" stroke-width="0.5"/>
<polygon points="394.5,365.0 426.8,375.0 426.8,379.0 394.5,369.0" fill="#8d8d8d" stroke="#333" stroke-width="0.5" stroke-linejoin="round"/>
<polygon points="394.5,365.0 397.0,363.4 429.0,373.4 426.8,375.0" fill="#6c6c6c"/>
<g fill="#17140f">
<ellipse cx="401.0" cy="362.5" rx="4.3" ry="3.2"/>
<ellipse cx="411.0" cy="365.5" rx="4.3" ry="3.2"/>
<ellipse cx="420.5" cy="368.8" rx="4.3" ry="3.2"/>
</g>
<polygon points="358.2,246.0 460.1,277.1 460.1,322.0 358.2,291.0" fill="#dccb8b" stroke="#2a2418" stroke-width="0.5" stroke-linejoin="round"/>
<polygon points="400.2,260.0 408.3,259.0 408.3,304.5 400.2,303.8" fill="#fdf3a7"/>
<polyline points="400.2,260.0 400.2,303.8" fill="none" stroke="#2a2418" stroke-width="0.6"/>
<polyline points="408.3,259.0 408.3,304.5" fill="none" stroke="#8a7a44" stroke-width="0.5"/>
<polygon points="366.9,258.7 390.9,265.9 390.9,299.2 366.9,292.0" fill="#2e221b"/>
<polygon points="367.9,260.4 372.1,261.6 372.1,275.3 367.9,274.0" fill="#c2b394"/>
<polygon points="367.9,275.3 372.1,276.6 372.1,292.1 367.9,290.9" fill="#d9ceb2"/>
<polygon points="373.9,262.2 378.1,263.4 378.1,277.1 373.9,275.8" fill="#c2b394"/>
<polygon points="373.9,277.1 378.1,278.4 378.1,293.9 373.9,292.7" fill="#d9ceb2"/>
<polygon points="379.9,264.0 384.1,265.2 384.1,278.9 379.9,277.6" fill="#c2b394"/>
<polygon points="379.9,278.9 384.1,280.2 384.1,295.7 379.9,294.5" fill="#d9ceb2"/>
<polygon points="385.9,265.8 390.1,267.0 390.1,280.7 385.9,279.4" fill="#c2b394"/>
<polygon points="385.9,280.7 390.1,282.0 390.1,297.5 385.9,296.3" fill="#d9ceb2"/>
<polygon points="414.5,268.4 434.5,274.6 434.5,308.4 414.5,303.3" fill="#2e221b"/>
<polygon points="415.6,270.1 420.2,271.6 420.2,285.8 415.6,284.5" fill="#c2b394"/>
<polygon points="415.6,285.8 420.2,287.1 420.2,303.4 415.6,302.2" fill="#d9ceb2"/>
<polygon points="422.2,272.2 426.9,273.6 426.9,287.7 422.2,286.4" fill="#c2b394"/>
<polygon points="422.2,287.7 426.9,289.0 426.9,305.1 422.2,303.9" fill="#d9ceb2"/>
<polygon points="428.9,274.3 433.6,275.7 433.6,289.6 428.9,288.3" fill="#c2b394"/>
<polygon points="428.9,289.6 433.6,290.9 433.6,306.8 428.9,305.6" fill="#d9ceb2"/>
<polygon points="405.8,303.3 436.0,308.8 432.4,314.0 410.0,306.5" fill="#3b3b3b"/>
<g fill="#2f6a2c">
<ellipse cx="437.0" cy="296.0" rx="3.6" ry="5.6"/>
<ellipse cx="436.7" cy="294.0" rx="2.4" ry="3" fill="#4f9a3c"/>
<ellipse cx="448.6" cy="299.0" rx="3.6" ry="5.6"/>
<ellipse cx="448.3" cy="297.0" rx="2.4" ry="3" fill="#4f9a3c"/>
</g>
<polygon points="434.8,306.0 439.4,306.8 439.2,311.5 435.0,310.8" fill="#cfc6a4" stroke="#555" stroke-width="0.4" stroke-linejoin="round"/>
<polygon points="446.8,308.0 450.6,308.6 450.4,310.5 447.0,310.0" fill="#cfc6a4"/>
<polyline points="437.0,301.0 437.0,306.0" fill="none" stroke="#4a3a20" stroke-width="0.7"/>
<polyline points="448.6,304.0 448.6,308.5" fill="none" stroke="#4a3a20" stroke-width="0.7"/>
<polygon points="460.1,262.0 500.0,249.0 521.5,242.0 568.6,238.0 568.6,284.3 559.3,286.9 558.8,336.1 443.0,375.0 432.9,378.4 432.9,326.0 460.1,318.0" fill="#fdf3a7"/>
<polyline points="568.6,240.0 568.6,284.3 559.3,286.9 558.8,336.1 432.9,378.4" fill="none" stroke="#2a2418" stroke-width="0.7"/>
<polyline points="432.9,328.0 432.9,378.4" fill="none" stroke="#2a2418" stroke-width="0.7"/>
<polyline points="460.1,277.0 460.1,306.0" fill="none" stroke="#2a2418" stroke-width="0.6"/>
<polygon points="497.4,289.4 504.9,287.1 504.9,296.6 497.4,299.2" fill="#1d1d22"/>
<polygon points="498.7,290.6 503.7,289.1 503.7,296.0 498.7,297.7" fill="#6a9be4"/>
<polygon points="526.6,307.4 553.2,298.6 553.2,321.2 526.6,329.9" fill="#1e1c1e"/>
<polygon points="527.9,308.7 532.3,307.2 532.3,326.2 527.9,327.7" fill="#83879c"/>
<polygon points="530.5,307.9 531.8,307.2 531.8,326.2 530.5,326.9" fill="#c3c6d3"/>
<polygon points="534.6,306.5 539.0,305.0 539.0,324.1 534.6,325.5" fill="#83879c"/>
<polygon points="537.2,305.7 538.5,305.0 538.5,324.1 537.2,324.8" fill="#c3c6d3"/>
<polygon points="541.2,304.3 545.6,302.8 545.6,321.9 541.2,323.3" fill="#83879c"/>
<polygon points="543.8,303.5 545.1,302.8 545.1,321.9 543.8,322.6" fill="#c3c6d3"/>
<polygon points="547.9,302.1 552.3,300.6 552.3,319.7 547.9,321.1" fill="#83879c"/>
<polygon points="550.5,301.3 551.8,300.6 551.8,319.7 550.5,320.4" fill="#c3c6d3"/>
<polygon points="465.1,327.9 491.2,319.7 491.2,344.0 465.1,352.5" fill="#1e1c1e"/>
<polygon points="466.4,329.2 470.7,327.8 470.7,348.9 466.4,350.3" fill="#83879c"/>
<polygon points="469.0,328.5 470.2,327.8 470.2,348.9 469.0,349.6" fill="#c3c6d3"/>
<polygon points="472.9,327.1 477.2,325.8 477.2,346.7 472.9,348.1" fill="#83879c"/>
<polygon points="475.5,326.5 476.7,325.8 476.7,346.7 475.5,347.4" fill="#c3c6d3"/>
<polygon points="479.5,325.1 483.8,323.7 483.8,344.6 479.5,346.0" fill="#83879c"/>
<polygon points="482.0,324.4 483.3,323.7 483.3,344.6 482.0,345.3" fill="#c3c6d3"/>
<polygon points="486.0,323.0 490.3,321.7 490.3,342.5 486.0,343.9" fill="#83879c"/>
<polygon points="488.5,322.4 489.8,321.7 489.8,342.5 488.5,343.2" fill="#c3c6d3"/>
<polygon points="345.9,230.7 400.7,247.6 400.7,261.9 345.9,244.0" fill="#e7d896" stroke="#2a2418" stroke-width="0.6" stroke-linejoin="round"/>
<polygon points="400.7,247.6 408.3,245.0 408.3,260.4 400.7,261.9" fill="#fdf3a7" stroke="#2a2418" stroke-width="0.5" stroke-linejoin="round"/>
<polygon points="408.3,245.0 460.6,261.3 460.6,277.1 408.3,260.4" fill="#e7d896" stroke="#2a2418" stroke-width="0.6" stroke-linejoin="round"/>
<polygon points="460.6,277.1 493.8,267.0 493.8,274.6 460.6,285.3" fill="#c3ab69"/>
<polygon points="460.6,261.3 499.4,249.1 499.4,264.3 460.6,277.1" fill="#fdf3a7" stroke="#2a2418" stroke-width="0.6" stroke-linejoin="round"/>
<polygon points="523.0,251.7 528.6,254.3 568.6,241.5 568.6,252.0 523.0,266.0" fill="#c3ab69"/>
<polygon points="345.9,230.7 352.0,230.5 405.8,221.0 413.0,220.5 439.1,229.0 440.1,235.8 484.6,252.7 493.0,250.0 498.4,249.1 460.6,261.3 408.3,245.0 400.7,247.6" fill="#a8451f"/>
<polyline points="345.9,230.7 400.7,247.6 408.3,245.0 460.6,261.3 498.4,249.1" fill="none" stroke="#2a2418" stroke-width="0.6"/>
<polygon points="440.1,235.8 470.0,247.0 452.0,247.0 430.0,238.0" fill="#8f3a1a" opacity=".55"/>
<polygon points="413.0,219.4 439.1,207.1 439.1,228.0 413.0,220.5" fill="#b24b26"/>
<polyline points="415.9,218.0 415.9,221.3" fill="none" stroke="#9a3d1c" stroke-width="0.5"/>
<polyline points="418.8,216.7 418.8,222.2" fill="none" stroke="#9a3d1c" stroke-width="0.5"/>
<polyline points="421.7,215.3 421.7,223.0" fill="none" stroke="#9a3d1c" stroke-width="0.5"/>
<polyline points="424.6,213.9 424.6,223.9" fill="none" stroke="#9a3d1c" stroke-width="0.5"/>
<polyline points="427.5,212.6 427.5,224.7" fill="none" stroke="#9a3d1c" stroke-width="0.5"/>
<polyline points="430.4,211.2 430.4,225.5" fill="none" stroke="#9a3d1c" stroke-width="0.5"/>
<polyline points="433.3,209.9 433.3,226.4" fill="none" stroke="#9a3d1c" stroke-width="0.5"/>
<polyline points="436.2,208.5 436.2,227.2" fill="none" stroke="#9a3d1c" stroke-width="0.5"/>
<polyline points="413.0,220.9 439.1,229.3" fill="none" stroke="#9aa0a8" stroke-width="1.4"/>
<polyline points="413.0,221.7 439.1,230.1" fill="none" stroke="#444" stroke-width="0.5"/>
<polygon points="348.5,230.3 440.1,199.3 439.1,207.1 413.0,219.4 405.8,221.0 357.1,232.4" fill="#0c0c0c"/>
<polyline points="347.5,229.8 440.1,198.4" fill="none" stroke="#9a9a8c" stroke-width="1.6"/>
<polyline points="346.5,229.2 440.1,197.3" fill="none" stroke="#1a1a1a" stroke-width="1.0"/>
<polygon points="440.1,197.9 493.3,214.8 493.3,250.0 484.6,252.7 440.1,235.8" fill="#d3c084" stroke="#2a2418" stroke-width="0.6" stroke-linejoin="round"/>
<polygon points="493.3,214.8 521.5,206.1 522.5,254.0 500.5,259.6 500.0,249.0 493.3,251.0" fill="#fdf3a7"/>
<polyline points="493.3,214.8 493.3,249.6" fill="none" stroke="#2a2418" stroke-width="0.6"/>
<polyline points="500.5,259.4 522.5,252.6" fill="none" stroke="#2a2418" stroke-width="0.6"/>
<polyline points="521.8,206.1 522.5,238.0" fill="none" stroke="#2a2418" stroke-width="0.6"/>
<ellipse cx="492.6" cy="249.5" rx="1.6" ry="1.2" fill="#111"/>
<polygon points="440.1,197.9 468.2,188.7 521.5,206.1 493.3,214.8" fill="#e6da98" stroke="#1a1a1a" stroke-width="1.0" stroke-linejoin="round"/>
<polygon points="443.6,198.0 468.4,190.6 518.3,206.3 493.3,213.7" fill="#0c0c0c"/>
<polygon points="446.0,199.3 468.6,193.4 513.5,207.6 493.3,213.4" fill="#c4c4c9"/>
<polygon points="522.5,207.1 573.7,223.0 527.6,238.6 522.5,236.8" fill="#a8451f"/>
<polygon points="522.5,204.6 577.5,222.0 573.7,223.4 522.5,207.6" fill="#0c0c0c"/>
<polyline points="511.5,201.2 580.9,222.6" fill="none" stroke="#9a9a8c" stroke-width="1.6"/>
<polyline points="511.2,200.2 581.2,221.8" fill="none" stroke="#1a1a1a" stroke-width="1.0"/>
<polygon points="523.0,238.4 528.6,238.9 528.6,254.3 523.0,251.7" fill="#dccb8b" stroke="#2a2418" stroke-width="0.6" stroke-linejoin="round"/>
<polygon points="528.6,238.9 580.9,223.0 580.9,236.8 528.6,254.3" fill="#fdf3a7" stroke="#2a2418" stroke-width="0.7" stroke-linejoin="round"/>
<polygon points="339.7,283.8 358.2,277.7 358.2,292.0 339.7,298.1" fill="#7d9fea" stroke="#24345e" stroke-width="0.5" stroke-linejoin="round"/>
<polygon points="339.7,283.8 432.4,313.5 432.4,328.3 339.7,298.1" fill="#5a80d6" stroke="#1c2b55" stroke-width="0.6" stroke-linejoin="round"/>
<polygon points="339.7,283.8 432.4,313.5 432.4,319.2 339.7,289.6" fill="#7094e2"/>
<polyline points="339.7,283.8 432.4,313.5" fill="none" stroke="#1c2b55" stroke-width="0.7"/>
<polygon points="432.4,313.5 460.1,305.3 460.1,320.2 432.4,328.3" fill="#6f9aea" stroke="#1c2b55" stroke-width="0.6" stroke-linejoin="round"/>
<polygon points="463.0,369.5 468.5,367.6 469.5,372.6 464.0,374.6" fill="#0c0c0c"/>
<polygon points="470.5,367.0 476.5,365.0 477.2,370.0 471.5,372.0" fill="#0c0c0c"/>
<polyline points="481.0,357.0 481.0,368.6" fill="none" stroke="#5a4630" stroke-width="1.4"/>
<polygon points="456.9,348.9 465.1,344.3 491.2,342.8 504.5,348.4 504.5,354.0 490.2,358.6 471.2,358.6 456.9,354.0" fill="#ffffff" stroke="#222" stroke-width="0.7" stroke-linejoin="round"/>
<polyline points="481.0,343.3 456.9,354.0" fill="none" stroke="#222" stroke-width="0.6"/>
<polyline points="481.0,343.3 471.2,358.6" fill="none" stroke="#222" stroke-width="0.6"/>
<polyline points="481.0,343.3 490.2,358.6" fill="none" stroke="#222" stroke-width="0.6"/>
<polyline points="481.0,343.3 504.5,354.0" fill="none" stroke="#222" stroke-width="0.6"/>
<polyline points="481.0,343.3 504.5,348.4" fill="none" stroke="#222" stroke-width="0.6"/>
<polyline points="481.0,343.3 456.9,348.9" fill="none" stroke="#222" stroke-width="0.6"/>
<ellipse cx="481" cy="343.2" rx="2.6" ry="1.2" fill="#111"/>
<ellipse cx="438.3" cy="356.8" rx="2.1" ry="2.5" fill="#6a4a30"/>
<polygon points="434.6,360.6 436.5,359.0 440.4,359.0 442.6,360.8 443.0,369.0 441.2,369.5 440.8,371.5 435.6,371.5 435.3,369.3 434.0,369.0" fill="#cbc6bd" stroke="#6b675f" stroke-width="0.4" stroke-linejoin="round"/>
<polygon points="435.8,371.3 440.8,371.3 440.6,382.3 438.8,382.3 438.4,374.5 437.8,382.3 436.0,382.3" fill="#9f8965"/>
<polygon points="213.9,313.7 276.8,334.1 276.8,367.8 213.9,346.6" fill="#b9b9b9" stroke="#222" stroke-width="0.7" stroke-linejoin="round"/>
<polygon points="276.8,334.1 279.2,334.9 279.2,368.6 276.8,367.8" fill="#dcdcdc" stroke="#222" stroke-width="0.5" stroke-linejoin="round"/>
<polygon points="279.2,337.6 314.1,348.8 314.1,380.4 279.2,368.6" fill="#111"/>
<polygon points="281.0,340.6 312.6,350.8 312.6,363.0 281.0,352.4" fill="#c9c9c9"/>
<polygon points="281.0,354.0 312.6,364.6 312.6,377.6 281.0,366.6" fill="#c4c4c4"/>
<polygon points="314.1,346.4 319.2,348.0 319.2,381.9 314.1,380.3" fill="#d4d4d4" stroke="#222" stroke-width="0.5" stroke-linejoin="round"/>
<polygon points="319.2,348.8 336.1,354.4 336.1,387.6 319.2,381.9" fill="#111"/>
<polygon points="321.0,351.6 334.8,356.2 334.8,368.0 321.0,363.4" fill="#cdcdcd"/>
<polygon points="321.0,365.0 334.8,369.6 334.8,385.0 321.0,380.3" fill="#c8c8c8"/>
<polyline points="322.6,361.6 322.6,366.5" fill="none" stroke="#222" stroke-width="0.6"/>
<polygon points="336.1,353.6 432.5,386.2 432.5,419.6 336.1,387.6" fill="#b9b9b9" stroke="#222" stroke-width="0.7" stroke-linejoin="round"/>
<polygon points="432.5,386.2 684.8,301.9 684.8,336.7 432.5,419.6" fill="#ffffff" stroke="#222" stroke-width="0.8" stroke-linejoin="round"/>
<polygon points="213.9,313.7 216.5,312.8 276.8,332.3 276.8,334.1" fill="#fff" stroke="#333" stroke-width="0.5" stroke-linejoin="round"/>
<polygon points="336.1,353.6 338.0,352.4 432.6,383.6 432.5,386.2" fill="#fff" stroke="#333" stroke-width="0.5" stroke-linejoin="round"/>
<polygon points="432.5,386.2 432.6,383.6 682.4,301.4 684.8,301.9" fill="#fff" stroke="#333" stroke-width="0.5" stroke-linejoin="round"/>
<!--H3D1-->
<!--PLAN0-->
<rect x="310.1" y="458.3" width="6.4" height="167.7" fill="#a9a9a9"/>
<rect x="316.3" y="455.6" width="149.8" height="172.2" fill="#ffffff" stroke="#444" stroke-width=".8"/>
<rect x="317.0" y="456.4" width="148.4" height="4.8" fill="#c9c9c9"/>
<rect x="318.5" y="458.6" width="145.5" height="2.6" fill="#ececec"/>
<path d="M316.6 455.9L321.6 461.2M465.8 455.9L462.6 461.2" stroke="#666" stroke-width=".5"/>
<rect x="462.6" y="461.2" width="3.0" height="163.4" fill="#d9d9d9"/>
<rect x="317.0" y="624.4" width="148.4" height="2.8" fill="#e2e2e2"/>
<rect x="321.6" y="461.2" width="141.0" height="163.2" fill="#5f9148"/>
<rect x="452.0" y="461.2" width="10.6" height="163.2" fill="#48793a"/>
<rect x="323.7" y="493.4" width="25.8" height="87.1" fill="#456f3a"/>
<rect x="349.0" y="484.5" width="30.5" height="6.0" fill="#456f3a"/>
<rect x="362.0" y="587.4" width="24.3" height="37.0" fill="#dcdccb"/>
<rect x="389.3" y="587.4" width="10.5" height="37.0" fill="#dcdccb"/>
<g stroke="#c3c6b0" stroke-width=".4">
<path d="M362 590.5H386.3M389.3 590.5H399.8"/>
<path d="M362 593.6H386.3M389.3 593.6H399.8"/>
<path d="M362 596.7H386.3M389.3 596.7H399.8"/>
<path d="M362 599.8H386.3M389.3 599.8H399.8"/>
<path d="M362 602.9H386.3M389.3 602.9H399.8"/>
<path d="M362 606.0H386.3M389.3 606.0H399.8"/>
<path d="M362 609.1H386.3M389.3 609.1H399.8"/>
<path d="M362 612.2H386.3M389.3 612.2H399.8"/>
<path d="M362 615.3H386.3M389.3 615.3H399.8"/>
<path d="M362 618.4H386.3M389.3 618.4H399.8"/>
<path d="M362 621.5H386.3M389.3 621.5H399.8"/>
<path d="M365.1 587.4V624.4"/>
<path d="M368.1 587.4V624.4"/>
<path d="M371.1 587.4V624.4"/>
<path d="M374.2 587.4V624.4"/>
<path d="M377.2 587.4V624.4"/>
<path d="M380.3 587.4V624.4"/>
<path d="M383.4 587.4V624.4"/>
<path d="M392.7 587.4V624.4"/>
<path d="M396.1 587.4V624.4"/>
</g>
<rect x="386.3" y="587.4" width="3.0" height="37.0" fill="#6f9f52"/>
<rect x="360.5" y="624.2" width="26.0" height="3.4" fill="#0a0a0a"/>
<rect x="389.6" y="624.2" width="10.6" height="3.4" fill="#0a0a0a"/>
<rect x="363.0" y="625.2" width="21.5" height="1.2" fill="#d0d0d0"/>
<rect x="358.3" y="579.5" width="66.0" height="8.1" fill="#515151"/>
<rect x="388.8" y="572.9" width="35.5" height="8.1" fill="#515151"/>
<rect x="402.0" y="587.0" width="18.0" height="2.6" fill="#1c1c1c"/>
<path d="M349 489.9H379.1V482.6H428.2V521.8H424V543.9H428.2V572.9H388.8V580.2H349Z" fill="#a7461f" stroke="#f1dfa0" stroke-width="1.3" stroke-linejoin="miter"/>
<path d="M348.2 489.1H378.3V481.8H429V522.6H424.8V543.1H429V573.7H389.6V581H348.2Z" fill="none" stroke="#3a2a18" stroke-width=".5"/>
<g stroke="#96391a" stroke-width=".35" opacity=".7">
<path d="M380.0 484.5H427.4"/>
<path d="M380.0 486.7H427.4"/>
<path d="M380.0 488.9H427.4"/>
<path d="M350.0 491.1H427.4"/>
<path d="M350.0 493.3H427.4"/>
<path d="M350.0 495.5H427.4"/>
<path d="M350.0 497.7H427.4"/>
<path d="M350.0 499.9H427.4"/>
<path d="M350.0 502.1H427.4"/>
<path d="M350.0 504.3H427.4"/>
<path d="M350.0 506.5H427.4"/>
<path d="M350.0 508.7H427.4"/>
<path d="M350.0 510.9H427.4"/>
<path d="M350.0 513.1H427.4"/>
<path d="M350.0 515.3H427.4"/>
<path d="M350.0 517.5H427.4"/>
<path d="M350.0 519.7H427.4"/>
<path d="M350.0 521.9H381.0"/>
<path d="M350.0 524.1H381.0"/>
<path d="M350.0 526.3H381.0"/>
<path d="M350.0 528.5H381.0"/>
<path d="M350.0 530.7H381.0"/>
<path d="M350.0 532.9H381.0"/>
<path d="M350.0 535.1H381.0"/>
<path d="M350.0 537.3H381.0"/>
<path d="M350.0 539.5H381.0"/>
<path d="M350.0 541.7H381.0"/>
<path d="M350.0 543.9H381.0"/>
<path d="M350.0 546.1H427.4"/>
<path d="M350.0 548.3H427.4"/>
<path d="M350.0 550.5H427.4"/>
<path d="M350.0 552.7H427.4"/>
<path d="M350.0 554.9H427.4"/>
<path d="M350.0 557.1H427.4"/>
<path d="M350.0 559.3H427.4"/>
<path d="M350.0 561.5H427.4"/>
<path d="M350.0 563.7H427.4"/>
<path d="M350.0 565.9H427.4"/>
<path d="M350.0 568.1H427.4"/>
<path d="M350.0 570.3H427.4"/>
<path d="M350.0 572.5H427.4"/>
<path d="M350.0 574.7H388.0"/>
<path d="M350.0 576.9H388.0"/>
</g>
<rect x="370.0" y="521.4" width="12.0" height="22.0" fill="#7c3218"/>
<rect x="351.1" y="531.2" width="18.4" height="3.4" fill="#e4e4e4"/>
<rect x="369.5" y="531.4" width="12.5" height="3.0" fill="#9c9c9c"/>
<rect x="381.9" y="521.4" width="42.1" height="22.5" fill="#c6c6c6" stroke="#f1dfa0" stroke-width="1.2"/>
<rect x="381.2" y="520.7" width="43.5" height="23.9" fill="none" stroke="#3a2a18" stroke-width=".45"/>
<rect x="383.0" y="534.0" width="40.0" height="8.8" fill="#bcbcbc"/>
<ellipse cx="444" cy="578" rx="12" ry="11" fill="#4a7d3b"/>
<polygon points="457.3,580.3 451.0,586.6 442.2,586.6 435.9,580.3 435.9,571.5 442.2,565.2 451.0,565.2 457.3,571.5" fill="#fff" stroke="#222" stroke-width=".6"/>
<path d="M446.6 575.9L457.3 580.3" stroke="#222" stroke-width=".55"/>
<path d="M446.6 575.9L451.0 586.6" stroke="#222" stroke-width=".55"/>
<path d="M446.6 575.9L442.2 586.6" stroke="#222" stroke-width=".55"/>
<path d="M446.6 575.9L435.9 580.3" stroke="#222" stroke-width=".55"/>
<path d="M446.6 575.9L435.9 571.5" stroke="#222" stroke-width=".55"/>
<path d="M446.6 575.9L442.2 565.2" stroke="#222" stroke-width=".55"/>
<path d="M446.6 575.9L451.0 565.2" stroke="#222" stroke-width=".55"/>
<path d="M446.6 575.9L457.3 571.5" stroke="#222" stroke-width=".55"/>
<circle cx="446.6" cy="575.9" r="1.5" fill="#111"/>
<circle cx="430.6" cy="587.8" r="1.5" fill="none" stroke="#333" stroke-width=".6"/>
<g fill="#15261b">
<ellipse cx="328.0" cy="541.0" rx="9.0" ry="3.0" transform="rotate(-30 328.0 541.0)"/>
<ellipse cx="334.0" cy="538.0" rx="8.0" ry="3.0" transform="rotate(20 334.0 538.0)"/>
<ellipse cx="326.0" cy="549.0" rx="10.0" ry="3.2" transform="rotate(5 326.0 549.0)"/>
<ellipse cx="331.0" cy="556.0" rx="10.0" ry="3.2" transform="rotate(35 331.0 556.0)"/>
<ellipse cx="338.0" cy="547.0" rx="9.0" ry="3.0" transform="rotate(-50 338.0 547.0)"/>
<ellipse cx="341.0" cy="558.0" rx="9.0" ry="3.2" transform="rotate(-20 341.0 558.0)"/>
<ellipse cx="345.0" cy="566.0" rx="8.0" ry="3.0" transform="rotate(30 345.0 566.0)"/>
<ellipse cx="337.0" cy="568.0" rx="8.0" ry="3.0" transform="rotate(-10 337.0 568.0)"/>
<ellipse cx="332.0" cy="562.0" rx="8.0" ry="3.0" transform="rotate(60 332.0 562.0)"/>
<ellipse cx="322.0" cy="543.0" rx="6.0" ry="2.5" transform="rotate(-60 322.0 543.0)"/>
<ellipse cx="340.0" cy="552.0" rx="5.0" ry="9.0" transform="rotate(0 340.0 552.0)"/>
<ellipse cx="332.0" cy="548.0" rx="5.0" ry="8.0" transform="rotate(0 332.0 548.0)"/>
<ellipse cx="345.0" cy="572.0" rx="4.0" ry="4.0" transform="rotate(0 345.0 572.0)"/>
</g>
<g fill="#c9c9c9" opacity=".85">
<ellipse cx="305.0" cy="543.0" rx="5.0" ry="1.8" transform="rotate(-40 305.0 543.0)"/>
<ellipse cx="307.0" cy="549.0" rx="6.0" ry="1.8" transform="rotate(-10 307.0 549.0)"/>
<ellipse cx="306.0" cy="555.0" rx="6.0" ry="1.8" transform="rotate(20 306.0 555.0)"/>
<ellipse cx="309.0" cy="540.0" rx="4.0" ry="1.6" transform="rotate(-70 309.0 540.0)"/>
<ellipse cx="310.0" cy="558.0" rx="4.0" ry="1.6" transform="rotate(50 310.0 558.0)"/>
<ellipse cx="312.0" cy="548.0" rx="3.0" ry="6.0" transform="rotate(0 312.0 548.0)"/>
</g>
<g fill="#79b25a" opacity=".8">
<ellipse cx="332.0" cy="581.0" rx="5.0" ry="1.5" transform="rotate(-40 332.0 581.0)"/>
<ellipse cx="344.0" cy="587.0" rx="5.0" ry="1.5" transform="rotate(-40 344.0 587.0)"/>
<ellipse cx="337.0" cy="584.0" rx="4.0" ry="1.2" transform="rotate(-40 337.0 584.0)"/>
</g>
<!--PLAN1-->
<!--ELEV0-->
<path d="M586.7 530V500" stroke="#a8924c" stroke-width="2.2"/>
<path d="M586.7 530V500" stroke="#7a6a30" stroke-width="2.2" stroke-dasharray=".6 1.6"/>
<path d="M566.3 500.4q-6.5 9.9 -4.3 19.9M568.3 499.6q-5.9 11.1 -3.9 22.2M569.8 499.0q-5.4 10.4 -3.6 20.8M570.9 498.5q-5.0 10.2 -3.3 20.4M572.5 497.8q-4.5 11.2 -3.0 22.4M574.1 497.2q-4.0 13.4 -2.7 26.8M576.1 496.4q-3.4 10.9 -2.2 21.8M577.4 495.8q-2.9 14.2 -2.0 28.4M579.6 494.9q-2.3 11.8 -1.5 23.6M581.1 494.3q-1.8 14.9 -1.2 29.8M583.1 493.5q-1.1 17.3 -0.8 34.7M584.6 492.8q-0.7 16.8 -0.4 33.7M585.5 492.5q-0.4 18.0 -0.2 36.0M587.3 492.3q0.2 15.1 0.1 30.2M588.8 492.9q0.7 15.5 0.4 31.0M590.9 493.7q1.3 15.6 0.9 31.2M592.4 494.3q1.8 16.4 1.2 32.7M593.5 494.8q2.2 15.3 1.4 30.5M595.8 495.7q2.9 13.3 1.9 26.7M597.0 496.2q3.3 12.1 2.2 24.2M598.8 497.0q3.8 12.7 2.6 25.4M600.7 497.8q4.5 10.1 3.0 20.2M601.8 498.2q4.8 10.2 3.2 20.4M603.7 499.0q5.4 8.1 3.6 16.1M605.5 499.7q6.0 10.0 4.0 19.9M607.4 500.5q6.6 10.0 4.4 19.9" stroke="#1e3d2a" stroke-width=".9" fill="none" opacity=".85"/>
<path d="M586.7 488.0Q574.0 481.2 565.9 501.6Q576.5 485.0 586.7 488.0Z" fill="#1d3c29"/>
<path d="M578.9 487.4l-1.2 4.9M575.8 488.9l-1.2 4.2M573.3 490.9l-1.2 3.7M570.9 493.6l-1.2 3.1M568.7 496.6l-1.2 2.6M567.0 499.5l-1.2 2.2" stroke="#1d3c29" stroke-width=".7" fill="none"/>
<path d="M586.7 488.0Q597.3 485.0 608.2 501.6Q599.8 481.2 586.7 488.0Z" fill="#1d3c29"/>
<path d="M594.7 487.4l1.2 4.9M598.0 489.0l1.2 4.2M600.5 490.9l1.2 3.7M603.0 493.6l1.2 3.1M605.3 496.6l1.2 2.6M607.0 499.5l1.2 2.2" stroke="#1d3c29" stroke-width=".7" fill="none"/>
<path d="M586.7 488.0Q575.1 481.4 569.0 514.0Q578.9 484.0 586.7 488.0Z" fill="#1d3c29"/>
<path d="M580.1 488.8l-1.2 4.9M577.4 491.9l-1.2 4.2M575.3 495.5l-1.2 3.7M573.3 500.2l-1.2 3.1M571.4 505.5l-1.2 2.6M570.0 510.4l-1.2 2.2" stroke="#1d3c29" stroke-width=".7" fill="none"/>
<path d="M586.7 488.0Q594.9 484.1 605.0 514.2Q598.7 481.5 586.7 488.0Z" fill="#1d3c29"/>
<path d="M593.5 488.8l1.2 4.9M596.3 491.9l1.2 4.2M598.5 495.6l1.2 3.7M600.6 500.3l1.2 3.1M602.5 505.6l1.2 2.6M604.0 510.5l1.2 2.2" stroke="#1d3c29" stroke-width=".7" fill="none"/>
<path d="M586.7 488.0Q573.8 480.1 564.0 491.6Q574.6 484.6 586.7 488.0Z" fill="#1d3c29"/>
<path d="M578.2 485.9l-1.2 4.9M574.8 486.1l-1.2 4.2M572.1 486.7l-1.2 3.7M569.4 487.8l-1.2 3.1M567.1 489.2l-1.2 2.6M565.2 490.5l-1.2 2.2" stroke="#1d3c29" stroke-width=".7" fill="none"/>
<path d="M586.7 488.0Q599.6 484.6 610.7 491.4Q600.2 480.0 586.7 488.0Z" fill="#1d3c29"/>
<path d="M595.6 485.8l1.2 4.9M599.3 486.0l1.2 4.2M602.1 486.6l1.2 3.7M604.9 487.7l1.2 3.1M607.4 489.0l1.2 2.6M609.4 490.4l1.2 2.2" stroke="#1d3c29" stroke-width=".7" fill="none"/>
<path d="M586.7 488.0Q577.3 480.6 573.5 523.2Q581.6 482.2 586.7 488.0Z" fill="#1d3c29"/>
<path d="M581.8 489.3l-1.2 4.9M579.8 493.5l-1.2 4.2M578.2 498.4l-1.2 3.7M576.7 504.7l-1.2 3.1M575.3 511.8l-1.2 2.6M574.2 518.4l-1.2 2.2" stroke="#1d3c29" stroke-width=".7" fill="none"/>
<path d="M586.7 488.0Q591.6 482.1 599.5 523.1Q595.9 480.5 586.7 488.0Z" fill="#1d3c29"/>
<path d="M591.5 489.2l1.2 4.9M593.4 493.4l1.2 4.2M595.0 498.3l1.2 3.7M596.4 504.6l1.2 3.1M597.8 511.6l1.2 2.6M598.8 518.2l1.2 2.2" stroke="#1d3c29" stroke-width=".7" fill="none"/>
<path d="M586.7 488.0Q580.1 479.7 578.7 526.8Q584.6 480.6 586.7 488.0Z" fill="#1d3c29"/>
<path d="M583.7 489.2l-1.2 4.9M582.5 493.7l-1.2 4.2M581.6 499.2l-1.2 3.7M580.6 506.2l-1.2 3.1M579.8 514.0l-1.2 2.6M579.1 521.4l-1.2 2.2" stroke="#1d3c29" stroke-width=".7" fill="none"/>
<path d="M586.7 488.0Q588.3 480.2 593.8 526.2Q592.8 479.4 586.7 488.0Z" fill="#1d3c29"/>
<path d="M589.3 489.0l1.2 4.9M590.4 493.5l1.2 4.2M591.2 498.8l1.2 3.7M592.1 505.8l1.2 3.1M592.8 513.5l1.2 2.6M593.4 520.8l1.2 2.2" stroke="#1d3c29" stroke-width=".7" fill="none"/>
<path d="M586.7 490.0Q577.2 484.5 571.8 503.8Q579.9 487.4 586.7 490.0Z" fill="#2c6a3f"/>
<path d="M581.2 489.9l-1.2 4.9M578.9 491.4l-1.2 4.2M577.1 493.4l-1.2 3.7M575.4 496.0l-1.2 3.1M573.9 498.9l-1.2 2.6M572.7 501.7l-1.2 2.2" stroke="#2c6a3f" stroke-width=".7" fill="none"/>
<path d="M586.7 490.0Q593.5 487.4 601.6 503.8Q596.2 484.5 586.7 490.0Z" fill="#2c6a3f"/>
<path d="M592.2 489.9l1.2 4.9M594.5 491.4l1.2 4.2M596.3 493.4l1.2 3.7M598.0 496.0l1.2 3.1M599.5 498.9l1.2 2.6M600.7 501.7l1.2 2.2" stroke="#2c6a3f" stroke-width=".7" fill="none"/>
<path d="M586.7 490.0Q579.2 483.9 576.4 513.2Q582.8 485.6 586.7 490.0Z" fill="#2c6a3f"/>
<path d="M582.8 490.5l-1.2 4.9M581.3 493.2l-1.2 4.2M580.0 496.4l-1.2 3.7M578.9 500.7l-1.2 3.1M577.8 505.4l-1.2 2.6M576.9 509.9l-1.2 2.2" stroke="#2c6a3f" stroke-width=".7" fill="none"/>
<path d="M586.7 490.0Q590.6 485.6 597.0 513.2Q594.2 483.9 586.7 490.0Z" fill="#2c6a3f"/>
<path d="M590.6 490.5l1.2 4.9M592.1 493.2l1.2 4.2M593.4 496.4l1.2 3.7M594.5 500.7l1.2 3.1M595.6 505.4l1.2 2.6M596.5 509.9l1.2 2.2" stroke="#2c6a3f" stroke-width=".7" fill="none"/>
<path d="M586.7 490.0Q582.6 483.9 582.8 517.9Q586.6 484.4 586.7 490.0Z" fill="#2c6a3f"/>
<path d="M585.3 490.8l-1.2 4.9M584.7 494.1l-1.2 4.2M584.2 498.0l-1.2 3.7M583.8 503.0l-1.2 3.1M583.4 508.7l-1.2 2.6M583.1 514.0l-1.2 2.2" stroke="#2c6a3f" stroke-width=".7" fill="none"/>
<path d="M586.7 490.0Q586.8 484.4 590.6 517.9Q590.8 483.9 586.7 490.0Z" fill="#2c6a3f"/>
<path d="M588.1 490.8l1.2 4.9M588.7 494.1l1.2 4.2M589.2 498.0l1.2 3.7M589.6 503.0l1.2 3.1M590.0 508.7l1.2 2.6M590.3 514.0l1.2 2.2" stroke="#2c6a3f" stroke-width=".7" fill="none"/>
<path d="M586.7 490.0Q584.7 480.6 586.7 508.6Q588.7 480.6 586.7 490.0Z" fill="#2c6a3f"/>
<path d="M586.7 488.0l-1.2 4.9M586.7 490.0l-1.2 4.2M586.7 492.7l-1.2 3.7M586.7 496.6l-1.2 3.1M586.7 501.0l-1.2 2.6M586.7 505.4l-1.2 2.2" stroke="#2c6a3f" stroke-width=".7" fill="none"/>
<path d="M586.7 488.0Q576.3 479.6 566.8 482.3Q575.2 483.7 586.7 488.0Z" fill="#16301f"/>
<path d="M579.3 484.4l-1.2 4.9M576.2 483.4l-1.2 4.2M573.9 482.8l-1.2 3.7M571.6 482.4l-1.2 3.1M569.5 482.2l-1.2 2.6M567.9 482.2l-1.2 2.2" stroke="#16301f" stroke-width=".7" fill="none"/>
<path d="M586.7 488.0Q578.2 478.0 569.6 479.1Q576.3 481.8 586.7 488.0Z" fill="#16301f"/>
<path d="M580.3 483.2l-1.2 4.9M577.7 481.7l-1.2 4.2M575.7 480.8l-1.2 3.7M573.7 480.0l-1.2 3.1M571.9 479.5l-1.2 2.6M570.5 479.2l-1.2 2.2" stroke="#16301f" stroke-width=".7" fill="none"/>
<path d="M586.7 488.0Q579.9 475.7 571.8 474.4Q577.1 478.8 586.7 488.0Z" fill="#16301f"/>
<path d="M581.1 481.5l-1.2 4.9M578.9 479.2l-1.2 4.2M577.1 477.7l-1.2 3.7M575.4 476.4l-1.2 3.1M573.8 475.4l-1.2 2.6M572.6 474.7l-1.2 2.2" stroke="#16301f" stroke-width=".7" fill="none"/>
<path d="M586.7 488.0Q582.5 475.4 576.0 473.2Q579.1 477.9 586.7 488.0Z" fill="#16301f"/>
<path d="M582.7 481.0l-1.2 4.9M581.1 478.6l-1.2 4.2M579.8 477.0l-1.2 3.7M578.6 475.5l-1.2 3.1M577.5 474.4l-1.2 2.6M576.6 473.6l-1.2 2.2" stroke="#16301f" stroke-width=".7" fill="none"/>
<path d="M586.7 488.0Q584.7 475.0 579.6 471.7Q580.9 476.6 586.7 488.0Z" fill="#16301f"/>
<path d="M584.1 480.5l-1.2 4.9M583.0 477.8l-1.2 4.2M582.1 476.0l-1.2 3.7M581.3 474.4l-1.2 3.1M580.6 473.1l-1.2 2.6M580.0 472.2l-1.2 2.2" stroke="#16301f" stroke-width=".7" fill="none"/>
<path d="M586.7 488.0Q588.3 474.6 585.8 469.6Q584.1 474.8 586.7 488.0Z" fill="#16301f"/>
<path d="M586.4 479.7l-1.2 4.9M586.2 476.7l-1.2 4.2M586.1 474.6l-1.2 3.7M586.0 472.8l-1.2 3.1M586.0 471.3l-1.2 2.6M585.9 470.2l-1.2 2.2" stroke="#16301f" stroke-width=".7" fill="none"/>
<path d="M586.7 488.0Q591.0 476.9 590.9 472.6Q587.0 475.8 586.7 488.0Z" fill="#16301f"/>
<path d="M588.3 480.8l1.2 4.9M588.9 478.3l1.2 4.2M589.4 476.6l1.2 3.7M589.9 475.1l1.2 3.1M590.3 473.9l1.2 2.6M590.7 473.1l1.2 2.2" stroke="#16301f" stroke-width=".7" fill="none"/>
<path d="M586.7 488.0Q593.2 477.1 595.1 472.2Q589.4 475.1 586.7 488.0Z" fill="#16301f"/>
<path d="M589.8 480.7l1.2 4.9M591.1 478.1l1.2 4.2M592.1 476.3l1.2 3.7M593.0 474.8l1.2 3.1M593.9 473.5l1.2 2.6M594.6 472.7l1.2 2.2" stroke="#16301f" stroke-width=".7" fill="none"/>
<path d="M586.7 488.0Q594.6 478.7 598.2 474.5Q591.4 476.0 586.7 488.0Z" fill="#16301f"/>
<path d="M591.0 481.5l1.2 4.9M592.7 479.3l1.2 4.2M594.1 477.8l1.2 3.7M595.4 476.5l1.2 3.1M596.6 475.5l1.2 2.6M597.6 474.9l1.2 2.2" stroke="#16301f" stroke-width=".7" fill="none"/>
<path d="M586.7 488.0Q595.7 481.1 601.0 478.2Q593.4 477.7 586.7 488.0Z" fill="#16301f"/>
<path d="M592.0 482.9l1.2 4.9M594.2 481.2l1.2 4.2M595.9 480.2l1.2 3.7M597.5 479.3l1.2 3.1M599.0 478.7l1.2 2.6M600.2 478.4l1.2 2.2" stroke="#16301f" stroke-width=".7" fill="none"/>
<path d="M586.7 488.0Q598.1 482.2 606.0 479.8Q596.5 478.3 586.7 488.0Z" fill="#16301f"/>
<path d="M593.9 483.5l1.2 4.9M596.8 482.1l1.2 4.2M599.1 481.2l1.2 3.7M601.4 480.5l1.2 3.1M603.4 480.1l1.2 2.6M605.0 479.9l1.2 2.2" stroke="#16301f" stroke-width=".7" fill="none"/>
<path d="M586.7 488.0Q597.6 484.9 605.9 484.4Q596.9 480.8 586.7 488.0Z" fill="#16301f"/>
<path d="M593.9 485.2l1.2 4.9M596.8 484.5l1.2 4.2M599.1 484.2l1.2 3.7M601.3 484.1l1.2 3.1M603.3 484.1l1.2 2.6M604.9 484.3l1.2 2.2" stroke="#16301f" stroke-width=".7" fill="none"/>
<ellipse cx="586.7" cy="487.0" rx="9" ry="6.5" fill="#173222"/>
<ellipse cx="586.7" cy="494.0" rx="8" ry="4" fill="#2a6139" opacity=".8"/>
<path d="M611.3 530V500" stroke="#a8924c" stroke-width="2.2"/>
<path d="M611.3 530V500" stroke="#7a6a30" stroke-width="2.2" stroke-dasharray=".6 1.6"/>
<path d="M591.0 500.4q-6.4 6.7 -4.3 13.4M592.3 499.8q-6.0 9.2 -4.0 18.3M594.4 499.0q-5.4 8.1 -3.6 16.1M596.3 498.2q-4.8 8.9 -3.2 17.9M597.3 497.7q-4.4 11.4 -3.0 22.8M599.0 497.0q-3.9 10.0 -2.6 19.9M601.3 496.1q-3.2 14.2 -2.1 28.4M602.1 495.8q-2.9 14.2 -2.0 28.3M603.8 495.1q-2.4 13.7 -1.6 27.4M605.7 494.3q-1.8 15.5 -1.2 31.1M606.8 493.9q-1.4 15.2 -1.0 30.5M608.7 493.1q-0.8 15.4 -0.5 30.8M611.0 492.1q-0.1 15.8 -0.1 31.5M612.1 492.3q0.3 15.9 0.2 31.8M613.9 493.1q0.8 17.7 0.6 35.4M615.7 493.8q1.4 13.7 0.9 27.3M617.3 494.5q1.9 12.9 1.3 25.8M618.5 494.9q2.3 14.3 1.5 28.5M619.8 495.5q2.7 12.7 1.8 25.3M621.4 496.1q3.2 14.6 2.1 29.1M623.1 496.9q3.8 13.4 2.5 26.8M624.9 497.6q4.3 13.2 2.9 26.4M626.1 498.1q4.7 12.2 3.1 24.4M627.9 498.8q5.3 10.5 3.5 21.1M629.4 499.4q5.7 7.6 3.8 15.2M631.6 500.4q6.4 10.0 4.3 19.9" stroke="#1e3d2a" stroke-width=".9" fill="none" opacity=".85"/>
<path d="M611.3 488.0Q598.8 481.2 590.8 501.6Q601.3 485.0 611.3 488.0Z" fill="#1d3c29"/>
<path d="M603.7 487.4l-1.2 4.9M600.5 488.9l-1.2 4.2M598.1 490.9l-1.2 3.7M595.7 493.6l-1.2 3.1M593.6 496.6l-1.2 2.6M591.9 499.5l-1.2 2.2" stroke="#1d3c29" stroke-width=".7" fill="none"/>
<path d="M611.3 488.0Q621.4 485.0 632.0 501.6Q623.9 481.2 611.3 488.0Z" fill="#1d3c29"/>
<path d="M619.0 487.4l1.2 4.9M622.2 488.9l1.2 4.2M624.6 490.9l1.2 3.7M627.0 493.6l1.2 3.1M629.1 496.6l1.2 2.6M630.9 499.5l1.2 2.2" stroke="#1d3c29" stroke-width=".7" fill="none"/>
<path d="M611.3 488.0Q599.5 481.5 593.2 514.1Q603.2 484.1 611.3 488.0Z" fill="#1d3c29"/>
<path d="M604.6 488.8l-1.2 4.9M601.8 491.9l-1.2 4.2M599.7 495.6l-1.2 3.7M597.6 500.3l-1.2 3.1M595.7 505.5l-1.2 2.6M594.2 510.5l-1.2 2.2" stroke="#1d3c29" stroke-width=".7" fill="none"/>
<path d="M611.3 488.0Q619.1 484.0 628.9 514.0Q622.9 481.4 611.3 488.0Z" fill="#1d3c29"/>
<path d="M617.9 488.8l1.2 4.9M620.6 491.9l1.2 4.2M622.6 495.5l1.2 3.7M624.7 500.2l1.2 3.1M626.5 505.4l1.2 2.6M628.0 510.4l1.2 2.2" stroke="#1d3c29" stroke-width=".7" fill="none"/>
<path d="M611.3 488.0Q597.6 480.0 587.0 491.4Q598.2 484.5 611.3 488.0Z" fill="#1d3c29"/>
<path d="M602.2 485.8l-1.2 4.9M598.5 486.0l-1.2 4.2M595.6 486.6l-1.2 3.7M592.8 487.6l-1.2 3.1M590.3 489.0l-1.2 2.6M588.3 490.3l-1.2 2.2" stroke="#1d3c29" stroke-width=".7" fill="none"/>
<path d="M611.3 488.0Q624.5 484.5 635.9 491.3Q625.1 479.9 611.3 488.0Z" fill="#1d3c29"/>
<path d="M620.5 485.8l1.2 4.9M624.2 485.9l1.2 4.2M627.1 486.6l1.2 3.7M630.0 487.6l1.2 3.1M632.5 488.9l1.2 2.6M634.6 490.3l1.2 2.2" stroke="#1d3c29" stroke-width=".7" fill="none"/>
<path d="M611.3 488.0Q602.2 480.5 598.7 523.0Q606.5 482.0 611.3 488.0Z" fill="#1d3c29"/>
<path d="M606.6 489.2l-1.2 4.9M604.7 493.4l-1.2 4.2M603.2 498.3l-1.2 3.7M601.7 504.6l-1.2 3.1M600.4 511.6l-1.2 2.6M599.4 518.2l-1.2 2.2" stroke="#1d3c29" stroke-width=".7" fill="none"/>
<path d="M611.3 488.0Q616.1 482.0 624.0 523.0Q620.4 480.5 611.3 488.0Z" fill="#1d3c29"/>
<path d="M616.0 489.2l1.2 4.9M617.9 493.4l1.2 4.2M619.4 498.3l1.2 3.7M620.9 504.6l1.2 3.1M622.2 511.6l1.2 2.6M623.3 518.2l1.2 2.2" stroke="#1d3c29" stroke-width=".7" fill="none"/>
<path d="M611.3 488.0Q605.4 479.3 604.6 526.0Q609.9 480.1 611.3 488.0Z" fill="#1d3c29"/>
<path d="M608.8 488.9l-1.2 4.9M607.8 493.3l-1.2 4.2M607.0 498.7l-1.2 3.7M606.2 505.6l-1.2 3.1M605.5 513.3l-1.2 2.6M605.0 520.6l-1.2 2.2" stroke="#1d3c29" stroke-width=".7" fill="none"/>
<path d="M611.3 488.0Q612.7 480.1 618.0 526.0Q617.3 479.3 611.3 488.0Z" fill="#1d3c29"/>
<path d="M613.8 488.9l1.2 4.9M614.8 493.3l1.2 4.2M615.6 498.7l1.2 3.7M616.4 505.6l1.2 3.1M617.1 513.3l1.2 2.6M617.7 520.6l1.2 2.2" stroke="#1d3c29" stroke-width=".7" fill="none"/>
<path d="M611.3 490.0Q601.8 484.5 596.4 503.8Q604.5 487.4 611.3 490.0Z" fill="#2c6a3f"/>
<path d="M605.8 489.9l-1.2 4.9M603.5 491.4l-1.2 4.2M601.7 493.4l-1.2 3.7M600.0 496.0l-1.2 3.1M598.5 498.9l-1.2 2.6M597.3 501.7l-1.2 2.2" stroke="#2c6a3f" stroke-width=".7" fill="none"/>
<path d="M611.3 490.0Q618.1 487.4 626.2 503.8Q620.8 484.5 611.3 490.0Z" fill="#2c6a3f"/>
<path d="M616.8 489.9l1.2 4.9M619.1 491.4l1.2 4.2M620.9 493.4l1.2 3.7M622.6 496.0l1.2 3.1M624.1 498.9l1.2 2.6M625.3 501.7l1.2 2.2" stroke="#2c6a3f" stroke-width=".7" fill="none"/>
<path d="M611.3 490.0Q603.8 483.9 601.0 513.2Q607.4 485.6 611.3 490.0Z" fill="#2c6a3f"/>
<path d="M607.4 490.5l-1.2 4.9M605.9 493.2l-1.2 4.2M604.6 496.4l-1.2 3.7M603.5 500.7l-1.2 3.1M602.4 505.4l-1.2 2.6M601.5 509.9l-1.2 2.2" stroke="#2c6a3f" stroke-width=".7" fill="none"/>
<path d="M611.3 490.0Q615.2 485.6 621.6 513.2Q618.8 483.9 611.3 490.0Z" fill="#2c6a3f"/>
<path d="M615.2 490.5l1.2 4.9M616.7 493.2l1.2 4.2M618.0 496.4l1.2 3.7M619.1 500.7l1.2 3.1M620.2 505.4l1.2 2.6M621.1 509.9l1.2 2.2" stroke="#2c6a3f" stroke-width=".7" fill="none"/>
<path d="M611.3 490.0Q607.2 483.9 607.4 517.9Q611.2 484.4 611.3 490.0Z" fill="#2c6a3f"/>
<path d="M609.9 490.8l-1.2 4.9M609.3 494.1l-1.2 4.2M608.8 498.0l-1.2 3.7M608.4 503.0l-1.2 3.1M608.0 508.7l-1.2 2.6M607.7 514.0l-1.2 2.2" stroke="#2c6a3f" stroke-width=".7" fill="none"/>
<path d="M611.3 490.0Q611.4 484.4 615.2 517.9Q615.4 483.9 611.3 490.0Z" fill="#2c6a3f"/>
<path d="M612.7 490.8l1.2 4.9M613.3 494.1l1.2 4.2M613.8 498.0l1.2 3.7M614.2 503.0l1.2 3.1M614.6 508.7l1.2 2.6M614.9 514.0l1.2 2.2" stroke="#2c6a3f" stroke-width=".7" fill="none"/>
<path d="M611.3 490.0Q609.3 480.6 611.3 508.6Q613.3 480.6 611.3 490.0Z" fill="#2c6a3f"/>
<path d="M611.3 488.0l-1.2 4.9M611.3 490.0l-1.2 4.2M611.3 492.7l-1.2 3.7M611.3 496.6l-1.2 3.1M611.3 501.0l-1.2 2.6M611.3 505.4l-1.2 2.2" stroke="#2c6a3f" stroke-width=".7" fill="none"/>
<path d="M611.3 488.0Q601.4 480.2 592.5 483.3Q600.4 484.3 611.3 488.0Z" fill="#16301f"/>
<path d="M604.3 484.8l-1.2 4.9M601.4 484.0l-1.2 4.2M599.2 483.5l-1.2 3.7M597.0 483.2l-1.2 3.1M595.0 483.2l-1.2 2.6M593.5 483.2l-1.2 2.2" stroke="#16301f" stroke-width=".7" fill="none"/>
<path d="M611.3 488.0Q603.6 478.2 595.5 479.4Q601.6 481.9 611.3 488.0Z" fill="#16301f"/>
<path d="M605.4 483.3l-1.2 4.9M603.0 481.9l-1.2 4.2M601.2 481.0l-1.2 3.7M599.3 480.3l-1.2 3.1M597.7 479.8l-1.2 2.6M596.4 479.5l-1.2 2.2" stroke="#16301f" stroke-width=".7" fill="none"/>
<path d="M611.3 488.0Q603.5 476.2 594.9 475.5Q601.0 479.6 611.3 488.0Z" fill="#16301f"/>
<path d="M605.2 481.9l-1.2 4.9M602.7 479.8l-1.2 4.2M600.7 478.4l-1.2 3.7M598.8 477.3l-1.2 3.1M597.1 476.4l-1.2 2.6M595.8 475.8l-1.2 2.2" stroke="#16301f" stroke-width=".7" fill="none"/>
<path d="M611.3 488.0Q607.8 476.3 601.8 474.9Q604.4 478.8 611.3 488.0Z" fill="#16301f"/>
<path d="M607.8 481.6l-1.2 4.9M606.3 479.5l-1.2 4.2M605.2 478.0l-1.2 3.7M604.1 476.8l-1.2 3.1M603.1 475.8l-1.2 2.6M602.3 475.2l-1.2 2.2" stroke="#16301f" stroke-width=".7" fill="none"/>
<path d="M611.3 488.0Q610.4 476.3 606.1 473.9Q606.5 477.7 611.3 488.0Z" fill="#16301f"/>
<path d="M609.4 481.3l-1.2 4.9M608.6 479.0l-1.2 4.2M608.0 477.4l-1.2 3.7M607.4 476.0l-1.2 3.1M606.8 475.0l-1.2 2.6M606.4 474.3l-1.2 2.2" stroke="#16301f" stroke-width=".7" fill="none"/>
<path d="M611.3 488.0Q612.8 474.6 610.1 469.6Q608.6 474.8 611.3 488.0Z" fill="#16301f"/>
<path d="M610.9 479.7l-1.2 4.9M610.7 476.8l-1.2 4.2M610.6 474.7l-1.2 3.7M610.4 472.8l-1.2 3.1M610.3 471.3l-1.2 2.6M610.2 470.3l-1.2 2.2" stroke="#16301f" stroke-width=".7" fill="none"/>
<path d="M611.3 488.0Q615.9 476.1 616.0 471.1Q611.8 475.0 611.3 488.0Z" fill="#16301f"/>
<path d="M613.0 480.2l1.2 4.9M613.8 477.5l1.2 4.2M614.3 475.6l1.2 3.7M614.8 473.9l1.2 3.1M615.3 472.6l1.2 2.6M615.7 471.7l1.2 2.2" stroke="#16301f" stroke-width=".7" fill="none"/>
<path d="M611.3 488.0Q617.3 477.6 618.9 473.2Q613.6 475.7 611.3 488.0Z" fill="#16301f"/>
<path d="M614.1 481.0l1.2 4.9M615.3 478.6l1.2 4.2M616.2 477.0l1.2 3.7M617.1 475.5l1.2 3.1M617.8 474.4l1.2 2.6M618.5 473.6l1.2 2.2" stroke="#16301f" stroke-width=".7" fill="none"/>
<path d="M611.3 488.0Q619.8 478.3 623.9 473.7Q616.6 475.5 611.3 488.0Z" fill="#16301f"/>
<path d="M616.0 481.2l1.2 4.9M617.9 478.9l1.2 4.2M619.4 477.3l1.2 3.7M620.8 475.9l1.2 3.1M622.1 474.8l1.2 2.6M623.2 474.1l1.2 2.2" stroke="#16301f" stroke-width=".7" fill="none"/>
<path d="M611.3 488.0Q621.8 480.5 628.3 477.0Q619.5 477.0 611.3 488.0Z" fill="#16301f"/>
<path d="M617.7 482.4l1.2 4.9M620.2 480.6l1.2 4.2M622.3 479.4l1.2 3.7M624.2 478.4l1.2 3.1M626.0 477.7l1.2 2.6M627.4 477.2l1.2 2.2" stroke="#16301f" stroke-width=".7" fill="none"/>
<path d="M611.3 488.0Q621.7 483.0 628.8 481.3Q620.2 479.1 611.3 488.0Z" fill="#16301f"/>
<path d="M617.8 484.0l1.2 4.9M620.5 482.9l1.2 4.2M622.6 482.1l1.2 3.7M624.6 481.6l1.2 3.1M626.4 481.4l1.2 2.6M627.8 481.3l1.2 2.2" stroke="#16301f" stroke-width=".7" fill="none"/>
<path d="M611.3 488.0Q624.1 485.2 634.1 485.0Q623.6 481.1 611.3 488.0Z" fill="#16301f"/>
<path d="M619.8 485.4l1.2 4.9M623.3 484.8l1.2 4.2M626.0 484.5l1.2 3.7M628.6 484.5l1.2 3.1M631.0 484.6l1.2 2.6M632.9 484.8l1.2 2.2" stroke="#16301f" stroke-width=".7" fill="none"/>
<ellipse cx="611.3" cy="487.0" rx="9" ry="6.5" fill="#173222"/>
<ellipse cx="611.3" cy="494.0" rx="8" ry="4" fill="#2a6139" opacity=".8"/>
<rect x="554.3" y="530.1" width="89.2" height="35.7" fill="#fff" stroke="#222" stroke-width=".7"/>
<rect x="727.2" y="530.1" width="137.5" height="35.7" fill="#fff" stroke="#222" stroke-width=".7"/>
<polygon points="800.7,529.6 824.1,518.6 848,529.6" fill="#8b8b8b" stroke="#444" stroke-width=".5"/>
<path d="M824.1 518.6L814 529.4M824.1 518.6L835 529.4" stroke="#5a5a5a" stroke-width=".5"/><path d="M824.1 516.6v2.4" stroke="#333" stroke-width=".9"/>
<rect x="643.5" y="463.6" width="132.5" height="66.5" fill="#fcf5a9" stroke="#222" stroke-width=".7"/>
<rect x="699.7" y="414.8" width="76.3" height="33.5" fill="#fcf5a9" stroke="#222" stroke-width=".7"/>
<rect x="634.9" y="448.3" width="149.8" height="15.3" fill="#fcf5a9" stroke="#222" stroke-width=".7"/>
<path d="M711.2 448.3V463.6M702.1 463.6V497.3" stroke="#222" stroke-width=".7"/>
<rect x="656.3" y="474.7" width="33.3" height="39.3" fill="#3a2f2a"/>
<rect x="657.5" y="476.1" width="6.3" height="37.9" fill="#f6f2e6"/>
<rect x="657.5" y="476.1" width="2.4" height="37.9" fill="#d8ccb4"/>
<rect x="665.8" y="476.1" width="6.3" height="37.9" fill="#f6f2e6"/>
<rect x="665.8" y="476.1" width="2.4" height="37.9" fill="#d8ccb4"/>
<rect x="674.1" y="476.1" width="6.3" height="37.9" fill="#f6f2e6"/>
<rect x="674.1" y="476.1" width="2.4" height="37.9" fill="#d8ccb4"/>
<rect x="682.4" y="476.1" width="6.3" height="37.9" fill="#f6f2e6"/>
<rect x="682.4" y="476.1" width="2.4" height="37.9" fill="#d8ccb4"/>
<path d="M656.3 493.7H689.6" stroke="#3a2f2a" stroke-width="1"/>
<rect x="711.2" y="474.7" width="27.9" height="39.3" fill="#3a2f2a"/>
<rect x="712.5" y="476.1" width="7.1" height="37.9" fill="#f6f2e6"/>
<rect x="712.5" y="476.1" width="2.7" height="37.9" fill="#d8ccb4"/>
<rect x="721.8" y="476.1" width="7.1" height="37.9" fill="#f6f2e6"/>
<rect x="721.8" y="476.1" width="2.7" height="37.9" fill="#d8ccb4"/>
<rect x="731.1" y="476.1" width="7.1" height="37.9" fill="#f6f2e6"/>
<rect x="731.1" y="476.1" width="2.7" height="37.9" fill="#d8ccb4"/>
<path d="M711.2 493.7H739.1" stroke="#3a2f2a" stroke-width="1"/>
<rect x="712.5" y="476.2" width="7.0" height="20.8" fill="#a08878"/>
<g stroke="#2f6a24" stroke-width="1.2" stroke-linecap="round" fill="none">
<path d="M751.9 492L747.2 489.6"/>
<path d="M751.9 492L748.3 487.2"/>
<path d="M751.9 492L749.9 485.6"/>
<path d="M751.9 492L751.9 485.0"/>
<path d="M751.9 492L753.9 485.6"/>
<path d="M751.9 492L755.5 487.2"/>
<path d="M751.9 492L756.6 489.6"/>
</g>
<path d="M751.9 491.5V497.5" stroke="#5a4a20" stroke-width=".8"/>
<polygon points="749.1,498 754.7,498 753.7,512 750.1,512" fill="#cfd6d6" stroke="#7f8c99" stroke-width=".4"/>
<g stroke="#2f6a24" stroke-width="1.2" stroke-linecap="round" fill="none">
<path d="M766.7 492L762.0 489.6"/>
<path d="M766.7 492L763.1 487.2"/>
<path d="M766.7 492L764.7 485.6"/>
<path d="M766.7 492L766.7 485.0"/>
<path d="M766.7 492L768.7 485.6"/>
<path d="M766.7 492L770.3 487.2"/>
<path d="M766.7 492L771.4 489.6"/>
</g>
<path d="M766.7 491.5V497.5" stroke="#5a4a20" stroke-width=".8"/>
<polygon points="763.9,498 769.5,498 768.5,512 764.9,512" fill="#cfd6d6" stroke="#7f8c99" stroke-width=".4"/>
<rect x="646.4" y="515.8" width="53.3" height="14.3" fill="#fcf5a9" stroke="#222" stroke-width=".7"/>
<rect x="704.6" y="523.6" width="21.4" height="6.5" fill="#8b6b52" stroke="#222" stroke-width=".9"/>
<rect x="729.7" y="524.2" width="40.7" height="5.9" fill="#2a2a2a"/>
<rect x="731.0" y="525.4" width="8.5" height="4.7" fill="#cfd3d8"/>
<rect x="740.9" y="525.4" width="8.5" height="4.7" fill="#cfd3d8"/>
<rect x="750.8" y="525.4" width="8.5" height="4.7" fill="#cfd3d8"/>
<rect x="760.7" y="525.4" width="8.5" height="4.7" fill="#cfd3d8"/>
<rect x="643.5" y="497.3" width="132.5" height="16.5" fill="#6aa4ee" stroke="#2a4a8a" stroke-width=".6" fill-opacity=".74"/>
<path d="M702.1 497.3V513.8" stroke="#4a78c8" stroke-width=".5"/>
<rect x="644.9" y="531.8" width="52.8" height="34.2" fill="#0d0d0d"/>
<rect x="646.8" y="534.6" width="49.0" height="13.0" fill="#fff"/>
<rect x="646.8" y="549.6" width="49.0" height="13.8" fill="#fff"/>
<rect x="697.7" y="530.1" width="6.1" height="35.7" fill="#fff" stroke="#222" stroke-width=".5"/>
<rect x="703.8" y="531.8" width="23.4" height="34.2" fill="#0d0d0d"/>
<rect x="705.8" y="534.2" width="19.6" height="13.4" fill="#fff"/>
<rect x="705.8" y="549.4" width="19.6" height="14.2" fill="#fff"/>
<path d="M708.6 544V552.8" stroke="#222" stroke-width=".8"/>
<!--ELEV1-->
<!--TB0-->
<rect x="189.5" y="169.5" width="688" height="500.9" fill="none" stroke="#2a2a2a" stroke-width=".8"/>
<path d="M561.4 599.6H877.5M561.4 617.3H877.5M561.4 635H877.5M561.4 652.5H816.5M561.4 599.6V670.4M746.1 635V670.4M816.5 635V670.4M614.4 652.5V670.4" fill="none" stroke="#1c1c1c" stroke-width=".95"/>
<text x="566.0" y="608.2" textLength="18.8" font-family="Liberation Sans" font-size="5.8" fill="#222" lengthAdjust="spacingAndGlyphs">NOME</text>
<text x="566.0" y="626.8" textLength="28.7" font-family="Liberation Sans" font-size="5.8" fill="#222" lengthAdjust="spacingAndGlyphs">PROJETO</text>
<text x="566.0" y="645.6" textLength="46.4" font-family="Liberation Sans" font-size="5.8" fill="#222" lengthAdjust="spacingAndGlyphs">PLANTA/VISTA</text>
<text x="566.0" y="662.0" textLength="13.0" font-family="Liberation Sans" font-size="5.8" fill="#222" lengthAdjust="spacingAndGlyphs">ESC</text>
<text x="622.2" y="662.0" textLength="30.5" font-family="Liberation Sans" font-size="5.8" fill="#222" lengthAdjust="spacingAndGlyphs">EMPRESA</text>
<text x="753.4" y="645.2" textLength="7.8" font-family="Liberation Sans" font-size="5.8" fill="#222" lengthAdjust="spacingAndGlyphs">Nº</text>
<text x="753.4" y="662.0" textLength="17.5" font-family="Liberation Sans" font-size="5.8" fill="#222" lengthAdjust="spacingAndGlyphs">DATA</text>
<g transform="translate(834.9 652.4)">
<path d="M0 -8.4L7.2 -4.3L4.6 -2.7L0 -5.3L-4.6 -2.7V2.6L0 5.2L4.6 2.6L7.2 4.2L0 8.4L-7.3 4.2V-4.2Z" fill="#c5222e"/>
<path d="M-7.3 -4.2L0 -8.4V-5.3L-4.6 -2.7V2.6L-7.3 4.2Z" fill="#8e1720"/>
<path d="M-2.6 -1.6L2 -4.2L4.6 -2.7L0 0V2.2L-2.6 .8Z" fill="#e0444e"/>
<path d="M0 0L4.6 -2.7V-.3L0 2.2Z" fill="#a81c26"/>
</g>
<text x="846" y="652" font-family="Liberation Sans" font-weight="bold" font-size="6.3" fill="#d5404b" textLength="20.4" lengthAdjust="spacingAndGlyphs">Expert</text>
<text x="846" y="658.4" font-family="Liberation Sans" font-weight="bold" font-size="6.3" fill="#d5404b" textLength="20.4" lengthAdjust="spacingAndGlyphs">Cursos</text>
<path d="M846 660.6H866" stroke="#b8c4cc" stroke-width=".5" stroke-dasharray="1.6 .5"/>
<!--TB1-->
</svg></div></div>
  <div id="vscroll">
    <div class="abs" style="left:1px;top:191px;width:16px;height:199px;background:#cdcdcd"></div>
    <svg class="abs" style="left:0;top:0" width="18" height="568" viewBox="0 0 18 568"><path d="M5.7 11.6L9.5 7.8L13.3 11.6" stroke="#505050" stroke-width="1.5" fill="none"/><path d="M5.7 557L9.5 560.8L13.3 557" stroke="#505050" stroke-width="1.5" fill="none"/></svg>
  </div>
  <div id="hscroll">
    <div class="abs" style="left:362.5px;top:1px;width:242.5px;height:16px;background:#cdcdcd"></div>
    <svg class="abs" style="left:0;top:0" width="958" height="18" viewBox="0 0 958 18"><path d="M11.4 5.6L7.6 9.4L11.4 13.2" stroke="#505050" stroke-width="1.5" fill="none"/><path d="M947.6 5.6L951.4 9.4L947.6 13.2" stroke="#505050" stroke-width="1.5" fill="none"/></svg>
  </div>
  <div id="corner"></div>
  <div id="status">
    <div class="abs" style="left:0;top:1px;width:976px;height:1px;background:#d4d4d4"></div>
    <span class="abs" style="left:5.4px;top:11px;font-size:11px;letter-spacing:-.24px;white-space:nowrap;color:#1e1e1e">Clique para selecionar os itens que deseja manipular. Pressione Shift e clique para ampliar a seleção. Clique e arraste para sele...</span>
    <span class="abs" style="left:669.3px;top:11px;font-size:11px;letter-spacing:-.2px;color:#7a7a7a">Medidas</span>
    <div class="abs" style="left:721px;top:7px;width:149px;height:18px;background:#fff;border:1px solid #878787"></div>
    <div class="abs" style="left:876.5px;top:7px;width:95.5px;height:18px;background:#fff;border:1px solid #adadad"></div>
    <span class="abs" style="left:879.5px;top:11px;font-size:11px;color:#111">47%</span>
    <svg class="abs" style="left:956px;top:12px" width="12" height="8" viewBox="0 0 12 8"><path d="M2.8 1.8L6.3 5.2L9.8 1.8" stroke="#5a5a5a" stroke-width="1" fill="none"/></svg>
  </div>
  <div id="split"><div class="abs" style="left:1px;top:0;width:1px;height:650px;background:#c2c2c2"></div><div class="abs" style="left:2px;top:0;width:4px;height:650px;background:#f7f7f7"></div></div>
  <div id="panel"><div id="phead"><span style="position:absolute;left:2px;top:1px;color:#111;letter-spacing:.08px">Bandeja padrão</span><svg class="abs" style="left:260px;top:0" width="40" height="19" viewBox="1286 128 40 19"><path d="M1295 133.2h3.4M1295.5 133.4v4.2M1297.9 133.4v4.2M1294.3 137.8h4.8M1296.7 138v3" stroke="#111" stroke-width="1" fill="none"/><path d="M1312 134.4l5 5M1317 134.4l-5 5" stroke="#111" stroke-width="1.8" fill="none"/></svg></div>
<div class="bar" style="top:21.60px"><i class="tri"></i><span class="lb">Cores</span><i class="x"><svg width="13" height="13" viewBox="0 0 13 13"><path d="M3.6 3.9L8.6 8.9M8.6 3.9L3.6 8.9" stroke="#2a2a20" stroke-width="1.05" fill="none"/></svg></i></div>
<div class="bar" style="top:44.27px"><i class="tri"></i><span class="lb">Estilo da forma</span><i class="x"><svg width="13" height="13" viewBox="0 0 13 13"><path d="M3.6 3.9L8.6 8.9M8.6 3.9L3.6 8.9" stroke="#2a2a20" stroke-width="1.05" fill="none"/></svg></i></div>
<div class="bar" style="top:66.94px"><i class="tri"></i><span class="lb">Preenchimento de Padrão</span><i class="x"><svg width="13" height="13" viewBox="0 0 13 13"><path d="M3.6 3.9L8.6 8.9M8.6 3.9L3.6 8.9" stroke="#2a2a20" stroke-width="1.05" fill="none"/></svg></i></div>
<div class="bar" style="top:89.61px"><i class="tri"></i><span class="lb">Modelo do SketchUp</span><i class="x"><svg width="13" height="13" viewBox="0 0 13 13"><path d="M3.6 3.9L8.6 8.9M8.6 3.9L3.6 8.9" stroke="#2a2a20" stroke-width="1.05" fill="none"/></svg></i></div>
<div class="bar" style="top:112.28px"><i class="tri"></i><span class="lb">Desenho em escala</span><i class="x"><svg width="13" height="13" viewBox="0 0 13 13"><path d="M3.6 3.9L8.6 8.9M8.6 3.9L3.6 8.9" stroke="#2a2a20" stroke-width="1.05" fill="none"/></svg></i></div>
<div class="bar" style="top:134.95px"><i class="tri"></i><span class="lb">Estilo da dimensão</span><i class="x"><svg width="13" height="13" viewBox="0 0 13 13"><path d="M3.6 3.9L8.6 8.9M8.6 3.9L3.6 8.9" stroke="#2a2a20" stroke-width="1.05" fill="none"/></svg></i></div>
<div class="bar" style="top:157.62px"><i class="tri"></i><span class="lb">Estilo do texto</span><i class="x"><svg width="13" height="13" viewBox="0 0 13 13"><path d="M3.6 3.9L8.6 8.9M8.6 3.9L3.6 8.9" stroke="#2a2a20" stroke-width="1.05" fill="none"/></svg></i></div>
<div class="bar" style="top:180.29px"><i class="tri"></i><span class="lb">Páginas</span><i class="x"><svg width="13" height="13" viewBox="0 0 13 13"><path d="M3.6 3.9L8.6 8.9M8.6 3.9L3.6 8.9" stroke="#2a2a20" stroke-width="1.05" fill="none"/></svg></i></div>
<div class="bar" style="top:202.96px"><i class="tri"></i><span class="lb">Camadas</span><i class="x"><svg width="13" height="13" viewBox="0 0 13 13"><path d="M3.6 3.9L8.6 8.9M8.6 3.9L3.6 8.9" stroke="#2a2a20" stroke-width="1.05" fill="none"/></svg></i></div>
<div class="bar" style="top:225.63px"><i class="tri"></i><span class="lb">Álbuns</span><i class="x"><svg width="13" height="13" viewBox="0 0 13 13"><path d="M3.6 3.9L8.6 8.9M8.6 3.9L3.6 8.9" stroke="#2a2a20" stroke-width="1.05" fill="none"/></svg></i></div>
</div>
</div>
</body>
</html>
